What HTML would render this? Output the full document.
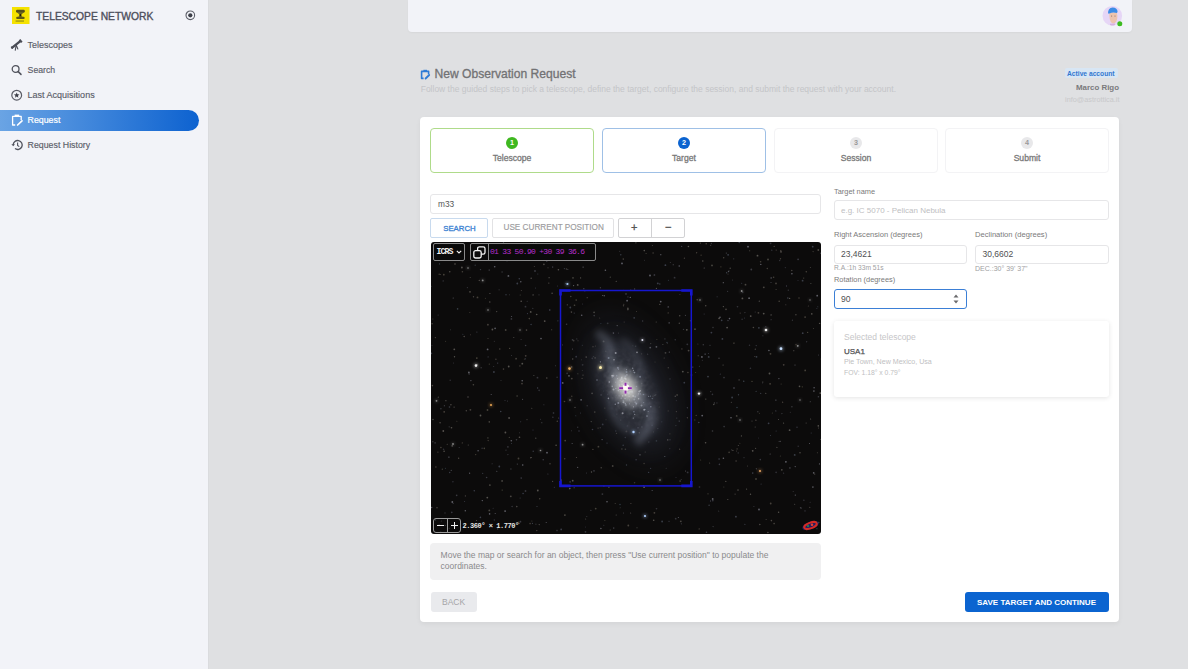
<!DOCTYPE html>
<html><head><meta charset="utf-8">
<style>
*{box-sizing:border-box;margin:0;padding:0}
html,body{width:1188px;height:669px;overflow:hidden;background:#dfe0e2;font-family:"Liberation Sans",sans-serif}
.a{position:absolute}
.t{position:absolute;white-space:nowrap;line-height:1}
#side{left:0;top:0;width:209px;height:669px;background:#f2f3f8;border-right:1px solid #dadbde}
#hdr{left:408px;top:0;width:723.5px;height:32px;background:#f2f3f8;border-radius:0 0 4px 4px;box-shadow:0 1px 2px rgba(0,0,0,.04)}
#card{left:420px;top:117px;width:699px;height:505px;background:#fff;border-radius:4px;box-shadow:0 2px 5px rgba(0,0,0,.05)}
.step{position:absolute;top:128px;height:44.5px;width:164px;border:1px solid #f3f3f5;border-radius:4px;background:#fff}
.circ{position:absolute;left:50%;top:7.5px;width:12px;height:12px;margin-left:-6px;border-radius:50%;font-size:7.2px;line-height:12px;text-align:center;color:#fff;font-weight:bold}
.slab{position:absolute;left:0;right:0;top:25px;text-align:center;font-size:8.6px;color:#777;line-height:1;-webkit-text-stroke:0.3px #7a7a7a}
.inp{position:absolute;border:1px solid #e6e6e8;border-radius:3px;background:#fff}
.lbl{position:absolute;font-size:7.4px;color:#7a7a7a;line-height:1;white-space:nowrap}
.btn{position:absolute;border:1px solid #e2e2e4;border-radius:2px;background:#fff;text-align:center;white-space:nowrap}
</style></head><body>

<!-- SIDEBAR -->
<div id="side" class="a"></div>
<div class="t" style="left:36px;top:11.8px;font-size:10.3px;color:#4d4f5c;-webkit-text-stroke:0.35px #4d4f5c">TELESCOPE NETWORK</div>

<div class="t" style="left:27.6px;top:41px;font-size:9px;color:#5a5d68;-webkit-text-stroke:0.15px #5a5d68">Telescopes</div>
<div class="t" style="left:27.6px;top:66px;font-size:8.7px;color:#5a5d68;-webkit-text-stroke:0.15px #5a5d68">Search</div>
<div class="t" style="left:27.6px;top:91px;font-size:9px;color:#5a5d68;-webkit-text-stroke:0.15px #5a5d68">Last Acquisitions</div>
<div class="a" style="left:0;top:110px;width:199px;height:21px;border-radius:0 10.5px 10.5px 0;background:linear-gradient(90deg,#6aa4e4,#0d62d0)"></div>
<div class="t" style="left:27.6px;top:116px;font-size:8.8px;color:#fff;-webkit-text-stroke:0.2px #fff">Request</div>
<div class="t" style="left:27.6px;top:141px;font-size:8.8px;color:#5a5d68;-webkit-text-stroke:0.15px #5a5d68">Request History</div>

<!-- HEADER -->
<div id="hdr" class="a"></div>
<!-- ICONS -->
<svg class="a" style="left:12.2px;top:6.8px" width="17.5" height="17.5" viewBox="0 0 17.5 17.5">
<rect x="0" y="0" width="17.5" height="17.5" fill="#f5e200"/>
<rect x="4" y="2.8" width="8.8" height="2.6" rx="1.2" fill="#55501a"/>
<path d="M4.4,5 L8.4,8.2 L12.4,5 Z M4.4,11.2 L8.4,8.2 L12.4,11.2 Z" fill="#6a6420"/>
<circle cx="8.4" cy="8.2" r="1.1" fill="#1e1a08"/>
<rect x="4.2" y="9.8" width="8.4" height="2.2" rx="1" fill="#5e5818"/>
<rect x="3.6" y="13.5" width="8.4" height="1.1" fill="#8c8618"/>
</svg>
<svg class="a" style="left:184px;top:9px" width="13" height="13" viewBox="0 0 13 13"><circle cx="6.3" cy="6.3" r="4.3" fill="none" stroke="#5c5e68" stroke-width="1.1"/><circle cx="6.3" cy="6.3" r="2.1" fill="#3c3e48"/></svg>
<svg class="a" style="left:10px;top:37px" width="14" height="16" viewBox="0 0 14 16"><path d="M2.2,10.6 L10,4.4" stroke="#4a4c56" stroke-width="2.4" stroke-linecap="round"/><path d="M9.6,2.6 L11.8,5.4" stroke="#4a4c56" stroke-width="2"/><path d="M6.2,8 L5.2,13.6 M6.2,8 L8,12.4" stroke="#4a4c56" stroke-width="1.1"/><path d="M1.2,9.6 L2.6,11.6" stroke="#4a4c56" stroke-width="1.2"/></svg>
<svg class="a" style="left:10px;top:63px" width="14" height="14" viewBox="0 0 14 14"><circle cx="5.6" cy="6" r="3.4" fill="none" stroke="#50525c" stroke-width="1.3"/><path d="M8.2,8.6 L11,11.4" stroke="#50525c" stroke-width="1.5" stroke-linecap="round"/></svg>
<svg class="a" style="left:10px;top:88px" width="14" height="14" viewBox="0 0 14 14"><circle cx="6.7" cy="7.2" r="4.9" fill="none" stroke="#5a5c66" stroke-width="1.2"/><path d="M6.70,4.40 L7.46,6.25 L9.46,6.40 L7.94,7.70 L8.40,9.65 L6.70,8.60 L5.00,9.65 L5.46,7.70 L3.94,6.40 L5.94,6.25 Z" fill="#3c3e48"/></svg>
<svg class="a" style="left:10px;top:113px" width="14" height="14" viewBox="0 0 14 14"><path d="M5.2,12 L2.6,12 L2.6,3.4 L11.2,3.4 L11.2,7" stroke="#fff" stroke-width="1.3" fill="none" stroke-linejoin="round"/><path d="M4.6,1.6 L9.2,1.6 L9.2,3.6 L4.6,3.6 Z" fill="#fff"/><path d="M7.6,12 L12,7.8" stroke="#fff" stroke-width="1.7" stroke-linecap="round"/></svg>
<svg class="a" style="left:10px;top:138px" width="14" height="14" viewBox="0 0 14 14"><path d="M3.2,7 A4.5,4.5 0 1 1 5,10.6" stroke="#50525c" stroke-width="1.3" fill="none"/><path d="M1.4,6.2 L3.2,8.2 L5,6.2 Z" fill="#50525c"/><path d="M7.6,4.6 L7.6,7.4 L9.3,8.6" stroke="#50525c" stroke-width="1.1" fill="none"/></svg>
<!-- avatar -->
<svg class="a" style="left:1101px;top:4px" width="26" height="26" viewBox="0 0 26 26">
<circle cx="11.3" cy="11.7" r="9.8" fill="#e6d6f6"/>
<path d="M8.4,8.6 Q8.2,15.5 9.8,18 Q11.2,19.8 13,19.6 Q15.6,18.6 16.2,15 Q16.6,11.5 15.8,8.4 Z" fill="#eec4ae"/>
<path d="M7,9.6 Q6.8,4 11.6,3.4 Q16.4,3.4 16.6,8 L15.8,9 Q12,7.6 8.6,9.4 Z" fill="#3c8ce6"/>
<circle cx="10.6" cy="12" r="0.6" fill="#8a6a60"/><circle cx="14" cy="12" r="0.6" fill="#8a6a60"/>
<path d="M9,21 Q11.3,22.2 14,21 L14,19.6 L9,19.8 Z" fill="#d8b0e0"/>
<circle cx="18.8" cy="19.8" r="2.5" fill="#3cbb20"/>
</svg>
<svg class="a" style="left:419px;top:68px" width="12" height="12" viewBox="0 0 12 12"><path d="M4.6,10.4 L2.6,10.4 L2.6,3.4 L9.6,3.4 L9.6,6.2" stroke="#2d7bd6" stroke-width="1.6" fill="none" stroke-linejoin="round"/><path d="M4.4,1.8 L8,1.8 L8,3.6 L4.4,3.6 Z" fill="#2d7bd6"/><path d="M6.6,10.5 L10.2,7" stroke="#2d7bd6" stroke-width="1.8" stroke-linecap="round"/></svg>



<div class="t" style="left:434.5px;top:68.4px;font-size:12.1px;color:#727274;-webkit-text-stroke:0.3px #727274">New Observation Request</div>
<div class="t" style="left:420.7px;top:84.5px;font-size:8.5px;color:#c4c5c8">Follow the guided steps to pick a telescope, define the target, configure the session, and submit the request with your account.</div>
<div class="a" style="left:1065px;top:68px;width:53px;height:10px;border-radius:2px;background:#d8e6f4"></div>
<div class="t" style="left:1067px;top:70.5px;font-size:6.7px;font-weight:bold;color:#3277d0">Active account</div>
<div class="t" style="right:69px;top:84px;font-size:7.9px;font-weight:bold;color:#7a7a7c">Marco Rigo</div>
<div class="t" style="right:68.5px;top:96px;font-size:7.3px;color:#c8c8ca">info@astrottica.it</div>

<!-- CARD -->
<div id="card" class="a"></div>

<div class="step" style="left:430px;border-color:#afdb8a"><div class="circ" style="background:#3fb820">1</div><div class="slab">Telescope</div></div>
<div class="step" style="left:602px;border-color:#9fc0e6"><div class="circ" style="background:#0b63d0">2</div><div class="slab">Target</div></div>
<div class="step" style="left:774px"><div class="circ" style="background:#e8e8ea;color:#999">3</div><div class="slab">Session</div></div>
<div class="step" style="left:945px"><div class="circ" style="background:#e8e8ea;color:#999">4</div><div class="slab">Submit</div></div>

<div class="inp" style="left:430px;top:194px;width:391px;height:19.5px"></div>
<div class="t" style="left:438px;top:199.6px;font-size:8.3px;color:#555">m33</div>

<div class="btn" style="left:430px;top:218px;width:58px;height:19.5px;border-color:#c8daee"></div>
<div class="t" style="left:443.2px;top:224.6px;font-size:7.8px;color:#3a7fd2;-webkit-text-stroke:0.3px #3a7fd2">SEARCH</div>
<div class="btn" style="left:492px;top:218px;width:121.5px;height:19.5px"></div>
<div class="t" style="left:503.5px;top:224px;font-size:8.2px;color:#9c9c9e;-webkit-text-stroke:0.15px #9c9c9e">USE CURRENT POSITION</div>
<div class="btn" style="left:618px;top:218px;width:67px;height:19.5px;border-color:#d2d2d4"></div>
<div class="a" style="left:651px;top:218px;width:1px;height:19.5px;background:#d2d2d4"></div>
<div class="t" style="left:631px;top:222px;font-size:11px;color:#555;-webkit-text-stroke:0.3px #555">+</div>
<div class="t" style="left:665px;top:222px;font-size:11px;color:#555;-webkit-text-stroke:0.3px #555">−</div>

<!-- MAP -->
<div id="map" class="a" style="left:431px;top:242px;width:389.5px;height:292px;background:#0c0b0b;border-radius:3px;overflow:hidden"><svg width="390" height="292" viewBox="0 0 390 292" style="position:absolute;left:0;top:0">
<defs>
<filter id="b8" x="-50%" y="-50%" width="200%" height="200%"><feGaussianBlur stdDeviation="9"/></filter>
<filter id="b5" x="-50%" y="-50%" width="200%" height="200%"><feGaussianBlur stdDeviation="5"/></filter>
<filter id="b3" x="-50%" y="-50%" width="200%" height="200%"><feGaussianBlur stdDeviation="3"/></filter>
<filter id="b2" x="-50%" y="-50%" width="200%" height="200%"><feGaussianBlur stdDeviation="1.6"/></filter>
<filter id="bs" x="0" y="0" width="390" height="292" filterUnits="userSpaceOnUse"><feGaussianBlur stdDeviation="0.45"/></filter>
<filter id="b1" x="-100%" y="-100%" width="300%" height="300%"><feGaussianBlur stdDeviation="0.6"/></filter>
</defs>
<g filter="url(#bs)">
<circle cx="126.3" cy="44.0" r="0.5" fill="#3a3a40"/>
<circle cx="320.3" cy="27.5" r="0.9" fill="#3a3a40"/>
<circle cx="354.8" cy="62.7" r="0.5" fill="#4a4642"/>
<circle cx="163.1" cy="70.3" r="0.9" fill="#4a4642"/>
<circle cx="23.1" cy="165.1" r="0.6" fill="#55524e"/>
<circle cx="244.7" cy="276.7" r="0.9" fill="#34343a"/>
<circle cx="154.7" cy="285.1" r="0.5" fill="#34343a"/>
<circle cx="334.8" cy="84.6" r="0.6" fill="#34343a"/>
<circle cx="45.9" cy="90.1" r="0.6" fill="#3a3a40"/>
<circle cx="226.8" cy="186.6" r="0.7" fill="#3a3a40"/>
<circle cx="213.6" cy="18.3" r="0.5" fill="#34343a"/>
<circle cx="80.3" cy="198.7" r="0.8" fill="#606068"/>
<circle cx="122.5" cy="171.0" r="0.8" fill="#3a3e48"/>
<circle cx="116.9" cy="232.0" r="0.6" fill="#3a3a40"/>
<circle cx="224.0" cy="153.4" r="0.7" fill="#55524e"/>
<circle cx="175.0" cy="177.8" r="0.5" fill="#3a3a40"/>
<circle cx="199.7" cy="48.2" r="0.7" fill="#45403a"/>
<circle cx="364.0" cy="123.1" r="0.5" fill="#606068"/>
<circle cx="217.6" cy="230.4" r="0.7" fill="#3a3e48"/>
<circle cx="271.2" cy="173.6" r="0.9" fill="#606068"/>
<circle cx="177.9" cy="245.3" r="0.7" fill="#4a4642"/>
<circle cx="271.8" cy="19.0" r="0.7" fill="#55524e"/>
<circle cx="225.4" cy="198.9" r="0.8" fill="#3a3e48"/>
<circle cx="279.5" cy="259.0" r="0.7" fill="#3a3a40"/>
<circle cx="366.9" cy="103.8" r="0.9" fill="#3a3a40"/>
<circle cx="192.5" cy="63.7" r="0.7" fill="#45403a"/>
<circle cx="288.0" cy="116.2" r="0.8" fill="#3a3a40"/>
<circle cx="64.9" cy="117.3" r="0.7" fill="#45403a"/>
<circle cx="319.5" cy="252.3" r="0.7" fill="#55524e"/>
<circle cx="162.0" cy="104.8" r="0.8" fill="#45403a"/>
<circle cx="58.9" cy="51.5" r="0.6" fill="#55524e"/>
<circle cx="91.0" cy="141.6" r="0.9" fill="#45403a"/>
<circle cx="102.5" cy="1.2" r="0.8" fill="#34343a"/>
<circle cx="144.0" cy="165.4" r="0.6" fill="#55524e"/>
<circle cx="335.1" cy="277.5" r="0.5" fill="#4a4642"/>
<circle cx="350.8" cy="227.8" r="0.9" fill="#4a4642"/>
<circle cx="155.2" cy="115.1" r="0.8" fill="#55524e"/>
<circle cx="156.2" cy="55.7" r="0.6" fill="#4a4642"/>
<circle cx="63.3" cy="99.3" r="0.5" fill="#3a3a40"/>
<circle cx="0.1" cy="44.2" r="0.5" fill="#3a3e48"/>
<circle cx="239.4" cy="20.5" r="0.6" fill="#34343a"/>
<circle cx="146.7" cy="185.2" r="0.7" fill="#34343a"/>
<circle cx="142.0" cy="35.9" r="0.8" fill="#4a4642"/>
<circle cx="187.4" cy="91.1" r="0.6" fill="#3a3a40"/>
<circle cx="292.4" cy="216.2" r="0.8" fill="#606068"/>
<circle cx="269.9" cy="150.8" r="0.6" fill="#34343a"/>
<circle cx="141.1" cy="201.5" r="0.5" fill="#606068"/>
<circle cx="206.0" cy="285.7" r="0.5" fill="#55524e"/>
<circle cx="329.7" cy="151.4" r="0.6" fill="#3a3e48"/>
<circle cx="301.1" cy="155.5" r="0.9" fill="#3a3e48"/>
<circle cx="248.2" cy="179.1" r="0.6" fill="#606068"/>
<circle cx="93.4" cy="117.0" r="0.6" fill="#45403a"/>
<circle cx="201.9" cy="103.8" r="0.5" fill="#3a3a40"/>
<circle cx="308.1" cy="137.9" r="0.6" fill="#55524e"/>
<circle cx="236.0" cy="100.5" r="0.7" fill="#3a3e48"/>
<circle cx="31.4" cy="29.8" r="0.8" fill="#45403a"/>
<circle cx="131.7" cy="140.9" r="0.9" fill="#606068"/>
<circle cx="0.7" cy="265.5" r="0.7" fill="#606068"/>
<circle cx="250.8" cy="243.7" r="0.5" fill="#4a4642"/>
<circle cx="305.1" cy="219.0" r="0.8" fill="#45403a"/>
<circle cx="169.2" cy="185.7" r="0.5" fill="#606068"/>
<circle cx="369.0" cy="210.8" r="0.8" fill="#4a4642"/>
<circle cx="289.9" cy="24.8" r="0.6" fill="#45403a"/>
<circle cx="387.3" cy="8.0" r="0.9" fill="#4a4642"/>
<circle cx="314.5" cy="42.7" r="0.9" fill="#4a4642"/>
<circle cx="256.3" cy="102.3" r="0.9" fill="#34343a"/>
<circle cx="51.1" cy="4.2" r="0.5" fill="#34343a"/>
<circle cx="292.3" cy="40.7" r="0.6" fill="#606068"/>
<circle cx="340.8" cy="8.2" r="0.6" fill="#3a3e48"/>
<circle cx="195.5" cy="223.0" r="0.7" fill="#3a3e48"/>
<circle cx="212.3" cy="243.6" r="0.5" fill="#55524e"/>
<circle cx="138.0" cy="133.8" r="0.9" fill="#606068"/>
<circle cx="352.7" cy="122.8" r="0.9" fill="#45403a"/>
<circle cx="207.4" cy="152.9" r="0.5" fill="#606068"/>
<circle cx="171.6" cy="53.5" r="0.5" fill="#606068"/>
<circle cx="311.7" cy="50.3" r="0.8" fill="#34343a"/>
<circle cx="282.8" cy="162.5" r="0.7" fill="#55524e"/>
<circle cx="202.2" cy="162.2" r="0.5" fill="#34343a"/>
<circle cx="22.2" cy="55.9" r="0.5" fill="#606068"/>
<circle cx="38.1" cy="132.0" r="0.5" fill="#606068"/>
<circle cx="348.7" cy="18.5" r="0.7" fill="#34343a"/>
<circle cx="379.6" cy="177.0" r="0.6" fill="#55524e"/>
<circle cx="108.1" cy="148.4" r="0.8" fill="#34343a"/>
<circle cx="367.2" cy="204.2" r="0.7" fill="#34343a"/>
<circle cx="348.2" cy="59.2" r="0.8" fill="#45403a"/>
<circle cx="162.5" cy="114.6" r="0.7" fill="#3a3a40"/>
<circle cx="261.8" cy="125.1" r="0.6" fill="#55524e"/>
<circle cx="118.1" cy="35.7" r="0.6" fill="#55524e"/>
<circle cx="250.9" cy="106.9" r="0.7" fill="#45403a"/>
<circle cx="377.3" cy="64.1" r="0.5" fill="#4a4642"/>
<circle cx="345.1" cy="47.5" r="0.6" fill="#45403a"/>
<circle cx="275.5" cy="290.3" r="0.8" fill="#3a3e48"/>
<circle cx="164.3" cy="104.1" r="0.5" fill="#55524e"/>
<circle cx="142.7" cy="98.7" r="0.8" fill="#4a4642"/>
<circle cx="274.2" cy="112.2" r="0.9" fill="#34343a"/>
<circle cx="115.2" cy="280.5" r="0.5" fill="#606068"/>
<circle cx="89.1" cy="255.9" r="0.5" fill="#3a3e48"/>
<circle cx="106.0" cy="264.5" r="0.6" fill="#3a3e48"/>
<circle cx="294.8" cy="239.4" r="0.7" fill="#4a4642"/>
<circle cx="58.3" cy="268.4" r="0.9" fill="#4a4642"/>
<circle cx="273.2" cy="26.1" r="0.5" fill="#606068"/>
<circle cx="268.4" cy="124.2" r="0.5" fill="#3a3e48"/>
<circle cx="366.0" cy="185.3" r="0.7" fill="#3a3a40"/>
<circle cx="237.2" cy="64.9" r="0.7" fill="#606068"/>
<circle cx="47.5" cy="3.4" r="0.9" fill="#4a4642"/>
<circle cx="361.4" cy="78.2" r="0.6" fill="#3a3a40"/>
<circle cx="205.5" cy="69.6" r="0.5" fill="#45403a"/>
<circle cx="102.1" cy="52.9" r="0.7" fill="#55524e"/>
<circle cx="119.0" cy="221.8" r="0.7" fill="#4a4642"/>
<circle cx="195.0" cy="51.9" r="0.7" fill="#606068"/>
<circle cx="7.1" cy="73.1" r="0.5" fill="#3a3a40"/>
<circle cx="285.9" cy="160.9" r="0.6" fill="#34343a"/>
<circle cx="185.2" cy="272.9" r="0.5" fill="#55524e"/>
<circle cx="319.4" cy="126.2" r="0.8" fill="#34343a"/>
<circle cx="325.5" cy="114.8" r="0.9" fill="#3a3e48"/>
<circle cx="268.2" cy="286.9" r="0.7" fill="#45403a"/>
<circle cx="324.6" cy="206.4" r="0.6" fill="#4a4642"/>
<circle cx="385.9" cy="286.7" r="0.6" fill="#3a3a40"/>
<circle cx="27.6" cy="216.3" r="0.7" fill="#4a4642"/>
<circle cx="63.7" cy="24.7" r="0.8" fill="#606068"/>
<circle cx="197.3" cy="283.5" r="0.9" fill="#45403a"/>
<circle cx="270.1" cy="13.2" r="0.6" fill="#45403a"/>
<circle cx="104.9" cy="1.1" r="0.7" fill="#3a3e48"/>
<circle cx="379.3" cy="159.7" r="0.6" fill="#3a3a40"/>
<circle cx="376.6" cy="90.4" r="0.7" fill="#45403a"/>
<circle cx="0.4" cy="111.4" r="0.8" fill="#3a3e48"/>
<circle cx="196.1" cy="58.7" r="0.9" fill="#606068"/>
<circle cx="1.9" cy="77.1" r="0.5" fill="#45403a"/>
<circle cx="155.8" cy="12.2" r="0.5" fill="#3a3e48"/>
<circle cx="118.7" cy="68.0" r="0.9" fill="#34343a"/>
<circle cx="332.8" cy="45.3" r="0.9" fill="#4a4642"/>
<circle cx="298.1" cy="210.4" r="0.8" fill="#45403a"/>
<circle cx="110.8" cy="180.7" r="0.6" fill="#3a3a40"/>
<circle cx="321.7" cy="208.8" r="0.9" fill="#55524e"/>
<circle cx="167.4" cy="204.7" r="0.9" fill="#45403a"/>
<circle cx="354.9" cy="219.8" r="0.9" fill="#606068"/>
<circle cx="317.0" cy="4.7" r="0.9" fill="#606068"/>
<circle cx="348.2" cy="199.4" r="0.6" fill="#3a3a40"/>
<circle cx="12.2" cy="38.9" r="0.7" fill="#3a3a40"/>
<circle cx="146.9" cy="131.8" r="0.5" fill="#55524e"/>
<circle cx="7.3" cy="155.2" r="0.6" fill="#4a4642"/>
<circle cx="102.9" cy="133.4" r="0.5" fill="#55524e"/>
<circle cx="363.7" cy="262.2" r="0.5" fill="#55524e"/>
<circle cx="205.1" cy="217.8" r="0.8" fill="#3a3e48"/>
<circle cx="315.6" cy="247.1" r="0.6" fill="#55524e"/>
<circle cx="295.0" cy="67.4" r="0.8" fill="#4a4642"/>
<circle cx="329.8" cy="22.4" r="0.7" fill="#606068"/>
<circle cx="18.2" cy="184.8" r="0.6" fill="#3a3a40"/>
<circle cx="233.9" cy="96.9" r="0.7" fill="#34343a"/>
<circle cx="221.4" cy="3.6" r="0.5" fill="#4a4642"/>
<circle cx="104.8" cy="196.2" r="0.6" fill="#55524e"/>
<circle cx="190.9" cy="207.0" r="0.7" fill="#4a4642"/>
<circle cx="181.7" cy="224.0" r="0.9" fill="#45403a"/>
<circle cx="121.6" cy="25.1" r="0.8" fill="#3a3a40"/>
<circle cx="112.9" cy="22.3" r="0.9" fill="#4a4642"/>
<circle cx="387.6" cy="113.0" r="0.6" fill="#3a3a40"/>
<circle cx="226.8" cy="41.4" r="0.9" fill="#3a3e48"/>
<circle cx="371.6" cy="38.7" r="0.9" fill="#3a3e48"/>
<circle cx="345.9" cy="205.4" r="0.6" fill="#4a4642"/>
<circle cx="350.1" cy="142.0" r="0.5" fill="#45403a"/>
<circle cx="1.4" cy="143.6" r="0.8" fill="#4a4642"/>
<circle cx="117.8" cy="41.1" r="0.7" fill="#4a4642"/>
<circle cx="123.3" cy="245.3" r="0.5" fill="#3a3e48"/>
<circle cx="292.8" cy="245.0" r="0.5" fill="#45403a"/>
<circle cx="278.1" cy="263.3" r="0.7" fill="#3a3e48"/>
<circle cx="145.2" cy="114.7" r="0.9" fill="#3a3a40"/>
<circle cx="140.7" cy="125.0" r="0.7" fill="#606068"/>
<circle cx="18.8" cy="29.7" r="0.7" fill="#55524e"/>
<circle cx="364.9" cy="72.8" r="0.7" fill="#4a4642"/>
<circle cx="199.3" cy="55.4" r="0.7" fill="#606068"/>
<circle cx="372.9" cy="258.2" r="0.8" fill="#34343a"/>
<circle cx="214.2" cy="210.1" r="0.5" fill="#55524e"/>
<circle cx="160.2" cy="179.6" r="0.6" fill="#55524e"/>
<circle cx="339.1" cy="141.8" r="0.9" fill="#45403a"/>
<circle cx="66.6" cy="121.1" r="0.7" fill="#3a3e48"/>
<circle cx="99.7" cy="215.7" r="0.7" fill="#4a4642"/>
<circle cx="255.8" cy="87.8" r="0.9" fill="#55524e"/>
<circle cx="153.8" cy="48.9" r="0.6" fill="#3a3a40"/>
<circle cx="81.1" cy="264.5" r="0.8" fill="#34343a"/>
<circle cx="85.8" cy="264.6" r="0.8" fill="#4a4642"/>
<circle cx="54.4" cy="56.2" r="0.5" fill="#45403a"/>
<circle cx="133.4" cy="26.6" r="0.6" fill="#3a3e48"/>
<circle cx="100.8" cy="166.3" r="0.5" fill="#55524e"/>
<circle cx="339.5" cy="111.8" r="0.9" fill="#45403a"/>
<circle cx="147.0" cy="98.8" r="0.5" fill="#4a4642"/>
<circle cx="108.2" cy="282.6" r="0.6" fill="#55524e"/>
<circle cx="196.3" cy="183.9" r="0.6" fill="#3a3a40"/>
<circle cx="105.7" cy="72.5" r="0.8" fill="#55524e"/>
<circle cx="173.9" cy="278.6" r="0.5" fill="#45403a"/>
<circle cx="12.6" cy="207.2" r="0.8" fill="#34343a"/>
<circle cx="191.0" cy="21.4" r="0.9" fill="#606068"/>
<circle cx="182.6" cy="131.1" r="0.5" fill="#45403a"/>
<circle cx="60.2" cy="152.5" r="0.5" fill="#606068"/>
<circle cx="281.5" cy="189.0" r="0.8" fill="#3a3a40"/>
<circle cx="215.1" cy="11.5" r="0.6" fill="#45403a"/>
<circle cx="222.1" cy="11.0" r="0.7" fill="#45403a"/>
<circle cx="244.3" cy="154.2" r="0.8" fill="#55524e"/>
<circle cx="297.9" cy="29.0" r="0.7" fill="#34343a"/>
<circle cx="368.0" cy="56.0" r="0.7" fill="#45403a"/>
<circle cx="308.3" cy="0.3" r="0.9" fill="#3a3e48"/>
<circle cx="388.6" cy="81.4" r="0.7" fill="#55524e"/>
<circle cx="327.4" cy="70.8" r="0.9" fill="#45403a"/>
<circle cx="213.3" cy="8.6" r="0.8" fill="#55524e"/>
<circle cx="253.4" cy="16.2" r="0.6" fill="#4a4642"/>
<circle cx="345.1" cy="189.0" r="0.5" fill="#3a3e48"/>
<circle cx="88.9" cy="123.9" r="0.7" fill="#45403a"/>
<circle cx="192.2" cy="203.2" r="0.8" fill="#3a3e48"/>
<circle cx="266.2" cy="57.8" r="0.7" fill="#55524e"/>
<circle cx="329.6" cy="19.7" r="0.8" fill="#45403a"/>
<circle cx="121.6" cy="239.4" r="0.6" fill="#4a4642"/>
<circle cx="86.4" cy="222.1" r="0.7" fill="#3a3a40"/>
<circle cx="371.3" cy="144.8" r="0.6" fill="#45403a"/>
<circle cx="189.2" cy="265.8" r="0.5" fill="#34343a"/>
<circle cx="57.1" cy="114.9" r="0.6" fill="#3a3a40"/>
<circle cx="379.9" cy="41.4" r="0.5" fill="#55524e"/>
<circle cx="23.5" cy="114.8" r="0.7" fill="#55524e"/>
<circle cx="44.2" cy="23.2" r="0.6" fill="#3a3e48"/>
<circle cx="74.4" cy="190.5" r="0.9" fill="#55524e"/>
<circle cx="182.4" cy="91.1" r="0.8" fill="#606068"/>
<circle cx="145.8" cy="96.9" r="0.6" fill="#3a3a40"/>
<circle cx="1.1" cy="81.7" r="0.7" fill="#4a4642"/>
<circle cx="372.7" cy="36.1" r="0.6" fill="#4a4642"/>
<circle cx="139.1" cy="239.9" r="0.8" fill="#3a3a40"/>
<circle cx="19.2" cy="138.3" r="0.7" fill="#34343a"/>
<circle cx="358.6" cy="56.4" r="0.7" fill="#55524e"/>
<circle cx="349.8" cy="8.8" r="0.8" fill="#45403a"/>
<circle cx="316.6" cy="223.9" r="0.5" fill="#4a4642"/>
<circle cx="13.6" cy="18.3" r="0.5" fill="#3a3e48"/>
<circle cx="76.0" cy="18.4" r="0.9" fill="#3a3e48"/>
<circle cx="141.6" cy="97.8" r="0.9" fill="#3a3a40"/>
<circle cx="102.2" cy="209.3" r="0.7" fill="#3a3e48"/>
<circle cx="116.0" cy="210.7" r="0.9" fill="#606068"/>
<circle cx="247.3" cy="275.4" r="0.5" fill="#606068"/>
<circle cx="91.2" cy="138.8" r="0.8" fill="#606068"/>
<circle cx="150.7" cy="73.3" r="0.8" fill="#606068"/>
<circle cx="192.5" cy="271.0" r="0.6" fill="#3a3a40"/>
<circle cx="313.0" cy="215.6" r="0.6" fill="#34343a"/>
<circle cx="92.1" cy="251.5" r="0.8" fill="#3a3e48"/>
<circle cx="305.7" cy="173.9" r="0.9" fill="#45403a"/>
<circle cx="152.8" cy="46.7" r="0.8" fill="#3a3a40"/>
<circle cx="253.3" cy="140.7" r="0.9" fill="#3a3e48"/>
<circle cx="62.7" cy="124.6" r="0.5" fill="#3a3a40"/>
<circle cx="103.3" cy="24.6" r="0.5" fill="#4a4642"/>
<circle cx="194.4" cy="207.3" r="0.8" fill="#45403a"/>
<circle cx="91.3" cy="121.7" r="0.9" fill="#55524e"/>
<circle cx="91.6" cy="157.3" r="0.5" fill="#606068"/>
<circle cx="327.9" cy="85.8" r="0.9" fill="#3a3e48"/>
<circle cx="145.5" cy="215.5" r="0.6" fill="#4a4642"/>
<circle cx="96.5" cy="71.6" r="0.6" fill="#3a3e48"/>
<circle cx="344.8" cy="168.9" r="0.7" fill="#3a3a40"/>
<circle cx="154.5" cy="289.8" r="0.9" fill="#34343a"/>
<circle cx="90.2" cy="236.1" r="0.8" fill="#3a3a40"/>
<circle cx="39.9" cy="138.6" r="0.6" fill="#606068"/>
<circle cx="174.8" cy="109.2" r="0.7" fill="#45403a"/>
<circle cx="46.5" cy="55.4" r="0.9" fill="#45403a"/>
<circle cx="362.8" cy="108.7" r="0.6" fill="#4a4642"/>
<circle cx="235.2" cy="226.3" r="0.5" fill="#3a3a40"/>
<circle cx="248.6" cy="207.2" r="0.7" fill="#45403a"/>
<circle cx="14.6" cy="99.3" r="0.5" fill="#45403a"/>
<circle cx="390.0" cy="11.2" r="0.6" fill="#606068"/>
<circle cx="4.4" cy="95.6" r="0.7" fill="#45403a"/>
<circle cx="242.2" cy="22.8" r="0.5" fill="#606068"/>
<circle cx="193.3" cy="141.2" r="0.8" fill="#3a3a40"/>
<circle cx="310.4" cy="193.9" r="0.6" fill="#55524e"/>
<circle cx="208.3" cy="190.7" r="0.8" fill="#55524e"/>
<circle cx="105.8" cy="288.6" r="0.7" fill="#4a4642"/>
<circle cx="371.7" cy="91.2" r="0.9" fill="#3a3e48"/>
<circle cx="161.5" cy="5.3" r="0.7" fill="#55524e"/>
<circle cx="76.9" cy="212.6" r="0.6" fill="#3a3a40"/>
<circle cx="169.3" cy="45.7" r="0.5" fill="#606068"/>
<circle cx="35.3" cy="168.7" r="0.7" fill="#4a4642"/>
<circle cx="301.5" cy="38.0" r="0.5" fill="#34343a"/>
<circle cx="55.6" cy="235.5" r="0.8" fill="#3a3a40"/>
<circle cx="223.4" cy="270.8" r="0.9" fill="#45403a"/>
<circle cx="56.9" cy="82.7" r="0.9" fill="#45403a"/>
<circle cx="360.9" cy="31.8" r="0.8" fill="#606068"/>
<circle cx="313.9" cy="282.3" r="0.6" fill="#3a3e48"/>
<circle cx="49.4" cy="275.4" r="0.8" fill="#3a3e48"/>
<circle cx="20.8" cy="270.4" r="0.8" fill="#3a3a40"/>
<circle cx="352.6" cy="181.1" r="0.6" fill="#55524e"/>
<circle cx="306.5" cy="64.8" r="0.8" fill="#34343a"/>
<circle cx="330.1" cy="242.1" r="0.6" fill="#34343a"/>
<circle cx="85.1" cy="116.7" r="0.9" fill="#45403a"/>
<circle cx="149.6" cy="35.9" r="0.6" fill="#55524e"/>
<circle cx="318.1" cy="56.2" r="0.9" fill="#606068"/>
<circle cx="295.4" cy="11.1" r="0.7" fill="#3a3a40"/>
<circle cx="152.0" cy="133.1" r="0.7" fill="#55524e"/>
<circle cx="163.8" cy="170.1" r="0.8" fill="#4a4642"/>
<circle cx="256.9" cy="130.5" r="0.8" fill="#45403a"/>
<circle cx="9.1" cy="180.7" r="0.8" fill="#4a4642"/>
<circle cx="91.7" cy="223.0" r="0.8" fill="#606068"/>
<circle cx="70.0" cy="138.2" r="0.5" fill="#3a3a40"/>
<circle cx="50.1" cy="125.7" r="0.5" fill="#606068"/>
<circle cx="172.4" cy="149.0" r="0.5" fill="#3a3a40"/>
<circle cx="248.2" cy="24.0" r="0.7" fill="#606068"/>
<circle cx="281.0" cy="23.4" r="0.9" fill="#4a4642"/>
<circle cx="254.6" cy="229.0" r="0.5" fill="#606068"/>
<circle cx="25.9" cy="179.3" r="0.5" fill="#45403a"/>
<circle cx="51.3" cy="258.6" r="0.7" fill="#606068"/>
<circle cx="357.3" cy="48.2" r="0.6" fill="#3a3a40"/>
<circle cx="324.9" cy="178.2" r="0.7" fill="#45403a"/>
<circle cx="126.3" cy="179.2" r="0.8" fill="#45403a"/>
<circle cx="99.1" cy="281.6" r="0.8" fill="#45403a"/>
<circle cx="230.8" cy="179.8" r="0.6" fill="#3a3e48"/>
<circle cx="145.2" cy="58.1" r="0.8" fill="#45403a"/>
<circle cx="248.3" cy="81.2" r="0.7" fill="#4a4642"/>
<circle cx="65.8" cy="229.2" r="0.5" fill="#606068"/>
<circle cx="207.0" cy="185.8" r="0.7" fill="#606068"/>
<circle cx="176.7" cy="152.3" r="0.5" fill="#3a3e48"/>
<circle cx="387.3" cy="183.9" r="0.8" fill="#55524e"/>
<circle cx="311.1" cy="77.3" r="0.7" fill="#34343a"/>
<circle cx="57.0" cy="96.6" r="0.5" fill="#4a4642"/>
<circle cx="89.7" cy="179.7" r="0.5" fill="#3a3e48"/>
<circle cx="319.7" cy="74.1" r="0.9" fill="#55524e"/>
<circle cx="349.3" cy="214.0" r="0.5" fill="#45403a"/>
<circle cx="58.3" cy="179.9" r="0.8" fill="#4a4642"/>
<circle cx="199.9" cy="261.5" r="0.6" fill="#4a4642"/>
<circle cx="88.6" cy="190.7" r="0.5" fill="#3a3a40"/>
<circle cx="1.0" cy="103.6" r="0.5" fill="#34343a"/>
<circle cx="139.3" cy="65.5" r="0.9" fill="#3a3e48"/>
<circle cx="229.7" cy="59.6" r="0.9" fill="#606068"/>
<circle cx="185.2" cy="39.3" r="0.6" fill="#55524e"/>
<circle cx="58.2" cy="28.0" r="0.6" fill="#606068"/>
<circle cx="259.5" cy="78.8" r="0.7" fill="#3a3a40"/>
<circle cx="21.9" cy="239.7" r="0.7" fill="#34343a"/>
<circle cx="251.8" cy="129.6" r="0.9" fill="#55524e"/>
<circle cx="192.2" cy="48.2" r="0.5" fill="#3a3a40"/>
<circle cx="24.0" cy="7.4" r="0.6" fill="#45403a"/>
<circle cx="62.1" cy="266.2" r="0.5" fill="#3a3a40"/>
<circle cx="238.9" cy="191.8" r="0.6" fill="#45403a"/>
<circle cx="161.1" cy="151.3" r="0.9" fill="#55524e"/>
<circle cx="250.2" cy="237.5" r="0.6" fill="#34343a"/>
<circle cx="120.7" cy="87.7" r="0.5" fill="#55524e"/>
<circle cx="305.4" cy="208.9" r="0.5" fill="#4a4642"/>
<circle cx="329.3" cy="217.6" r="0.8" fill="#3a3a40"/>
<circle cx="289.3" cy="132.1" r="0.6" fill="#3a3a40"/>
<circle cx="102.0" cy="188.1" r="0.5" fill="#3a3e48"/>
<circle cx="347.6" cy="270.2" r="0.7" fill="#55524e"/>
<circle cx="20.5" cy="185.7" r="0.8" fill="#55524e"/>
<circle cx="307.5" cy="152.8" r="0.7" fill="#3a3e48"/>
<circle cx="250.4" cy="281.8" r="0.6" fill="#3a3a40"/>
<circle cx="343.2" cy="4.4" r="0.7" fill="#45403a"/>
<circle cx="328.3" cy="59.2" r="0.6" fill="#55524e"/>
<circle cx="356.8" cy="56.0" r="0.8" fill="#3a3e48"/>
<circle cx="234.5" cy="110.8" r="0.9" fill="#4a4642"/>
<circle cx="184.1" cy="154.9" r="0.5" fill="#606068"/>
<circle cx="10.3" cy="279.1" r="0.6" fill="#34343a"/>
<circle cx="345.1" cy="230.4" r="0.8" fill="#34343a"/>
<circle cx="228.3" cy="165.0" r="0.6" fill="#45403a"/>
<circle cx="12.8" cy="32.7" r="0.9" fill="#45403a"/>
<circle cx="134.5" cy="41.4" r="0.5" fill="#3a3a40"/>
<circle cx="16.2" cy="202.2" r="0.5" fill="#55524e"/>
<circle cx="26.5" cy="13.6" r="0.9" fill="#606068"/>
<circle cx="141.7" cy="238.7" r="0.9" fill="#55524e"/>
<circle cx="25.7" cy="253.4" r="0.8" fill="#3a3a40"/>
<circle cx="96.2" cy="59.3" r="0.5" fill="#3a3a40"/>
<circle cx="370.2" cy="266.0" r="0.5" fill="#606068"/>
<circle cx="293.1" cy="184.6" r="0.8" fill="#3a3a40"/>
<circle cx="51.7" cy="231.3" r="0.6" fill="#3a3e48"/>
<circle cx="124.5" cy="123.7" r="0.5" fill="#3a3e48"/>
<circle cx="100.1" cy="82.5" r="0.7" fill="#3a3e48"/>
<circle cx="300.0" cy="175.8" r="0.8" fill="#606068"/>
<circle cx="112.2" cy="217.7" r="0.8" fill="#3a3a40"/>
<circle cx="170.2" cy="225.7" r="0.7" fill="#4a4642"/>
<circle cx="274.8" cy="157.1" r="0.6" fill="#55524e"/>
<circle cx="336.3" cy="26.5" r="0.7" fill="#45403a"/>
<circle cx="170.1" cy="152.9" r="0.7" fill="#606068"/>
<circle cx="292.7" cy="15.8" r="0.7" fill="#4a4642"/>
<circle cx="37.3" cy="203.0" r="0.6" fill="#4a4642"/>
<circle cx="231.1" cy="279.5" r="0.9" fill="#3a3e48"/>
<circle cx="225.4" cy="46.4" r="0.6" fill="#55524e"/>
<circle cx="90.3" cy="48.4" r="0.5" fill="#4a4642"/>
<circle cx="307.3" cy="203.6" r="0.5" fill="#55524e"/>
<circle cx="127.4" cy="27.8" r="0.8" fill="#55524e"/>
<circle cx="33.6" cy="259.4" r="0.5" fill="#3a3e48"/>
<circle cx="80.4" cy="76.9" r="0.9" fill="#34343a"/>
<circle cx="66.7" cy="286.9" r="0.6" fill="#4a4642"/>
<circle cx="49.5" cy="173.5" r="0.9" fill="#55524e"/>
<circle cx="13.2" cy="169.8" r="0.9" fill="#45403a"/>
<circle cx="338.5" cy="131.5" r="0.9" fill="#55524e"/>
<circle cx="126.1" cy="135.2" r="0.7" fill="#34343a"/>
<circle cx="90.1" cy="97.5" r="0.6" fill="#34343a"/>
<circle cx="74.7" cy="88.0" r="0.9" fill="#45403a"/>
<circle cx="282.1" cy="284.6" r="0.7" fill="#34343a"/>
<circle cx="203.6" cy="47.0" r="0.7" fill="#45403a"/>
<circle cx="100.9" cy="278.9" r="0.5" fill="#45403a"/>
<circle cx="375.3" cy="29.7" r="0.8" fill="#45403a"/>
<circle cx="383.7" cy="232.1" r="0.7" fill="#4a4642"/>
<circle cx="106.8" cy="31.9" r="0.5" fill="#3a3e48"/>
<circle cx="80.5" cy="113.4" r="0.5" fill="#3a3a40"/>
<circle cx="155.6" cy="231.0" r="0.6" fill="#34343a"/>
<circle cx="382.5" cy="86.5" r="0.5" fill="#45403a"/>
<circle cx="100.3" cy="215.6" r="0.5" fill="#55524e"/>
<circle cx="94.5" cy="249.0" r="0.9" fill="#34343a"/>
<circle cx="292.1" cy="123.0" r="0.6" fill="#55524e"/>
<circle cx="281.7" cy="257.0" r="0.9" fill="#606068"/>
<circle cx="89.2" cy="53.0" r="0.5" fill="#4a4642"/>
<circle cx="168.7" cy="75.9" r="0.5" fill="#4a4642"/>
<circle cx="94.5" cy="116.8" r="0.6" fill="#3a3e48"/>
<circle cx="331.3" cy="141.0" r="0.5" fill="#34343a"/>
<circle cx="334.8" cy="151.3" r="0.6" fill="#55524e"/>
<circle cx="127.9" cy="3.1" r="0.8" fill="#3a3a40"/>
<circle cx="14.9" cy="158.7" r="0.6" fill="#55524e"/>
<circle cx="304.9" cy="274.7" r="0.9" fill="#3a3e48"/>
<circle cx="39.4" cy="167.8" r="0.9" fill="#45403a"/>
<circle cx="279.7" cy="149.6" r="0.7" fill="#34343a"/>
<circle cx="133.7" cy="216.7" r="0.8" fill="#45403a"/>
<circle cx="386.2" cy="53.7" r="0.9" fill="#606068"/>
<circle cx="363.7" cy="212.9" r="0.9" fill="#3a3e48"/>
<circle cx="248.7" cy="73.7" r="0.8" fill="#4a4642"/>
<circle cx="24.0" cy="22.0" r="0.8" fill="#55524e"/>
<circle cx="272.3" cy="102.8" r="0.7" fill="#3a3a40"/>
<circle cx="87.5" cy="216.5" r="0.9" fill="#45403a"/>
<circle cx="387.7" cy="280.6" r="0.8" fill="#45403a"/>
<circle cx="64.2" cy="271.4" r="0.5" fill="#606068"/>
<circle cx="311.4" cy="56.4" r="0.9" fill="#55524e"/>
<circle cx="88.1" cy="281.4" r="0.7" fill="#55524e"/>
<circle cx="249.1" cy="239.1" r="0.8" fill="#4a4642"/>
<circle cx="388.5" cy="221.9" r="0.6" fill="#606068"/>
<circle cx="325.2" cy="103.6" r="0.6" fill="#3a3e48"/>
<circle cx="274.6" cy="200.7" r="0.8" fill="#55524e"/>
<circle cx="72.5" cy="0.8" r="0.7" fill="#3a3e48"/>
<circle cx="95.5" cy="88.1" r="0.8" fill="#4a4642"/>
<circle cx="167.1" cy="186.1" r="0.7" fill="#45403a"/>
<circle cx="362.2" cy="249.5" r="0.5" fill="#3a3a40"/>
<circle cx="322.9" cy="264.5" r="0.6" fill="#34343a"/>
<circle cx="324.2" cy="184.9" r="0.5" fill="#55524e"/>
<circle cx="4.5" cy="277.9" r="0.7" fill="#3a3e48"/>
<circle cx="237.2" cy="168.9" r="0.6" fill="#45403a"/>
<circle cx="302.8" cy="101.2" r="0.6" fill="#45403a"/>
<circle cx="352.6" cy="231.2" r="0.6" fill="#34343a"/>
<circle cx="347.5" cy="177.6" r="0.5" fill="#55524e"/>
<circle cx="351.6" cy="160.2" r="0.7" fill="#45403a"/>
<circle cx="192.8" cy="62.2" r="0.5" fill="#55524e"/>
<circle cx="327.3" cy="196.0" r="0.5" fill="#34343a"/>
<circle cx="46.2" cy="122.4" r="0.6" fill="#4a4642"/>
<circle cx="192.3" cy="17.1" r="0.8" fill="#45403a"/>
<circle cx="273.2" cy="72.0" r="0.6" fill="#34343a"/>
<circle cx="233.8" cy="214.5" r="0.6" fill="#606068"/>
<circle cx="125.1" cy="203.2" r="0.8" fill="#55524e"/>
<circle cx="115.8" cy="136.0" r="0.8" fill="#4a4642"/>
<circle cx="390.0" cy="197.4" r="0.6" fill="#55524e"/>
<circle cx="140.5" cy="188.8" r="0.5" fill="#34343a"/>
<circle cx="17.9" cy="215.1" r="0.7" fill="#606068"/>
<circle cx="382.9" cy="149.1" r="0.8" fill="#606068"/>
<circle cx="350.0" cy="9.9" r="0.8" fill="#55524e"/>
<circle cx="49.5" cy="27.6" r="0.7" fill="#3a3e48"/>
<circle cx="185.1" cy="153.5" r="0.6" fill="#3a3e48"/>
<circle cx="169.7" cy="123.3" r="0.9" fill="#3a3a40"/>
<circle cx="322.4" cy="85.5" r="0.8" fill="#4a4642"/>
<circle cx="130.2" cy="287.4" r="0.9" fill="#3a3e48"/>
<circle cx="380.2" cy="191.1" r="0.5" fill="#3a3e48"/>
<circle cx="75.0" cy="208.2" r="0.6" fill="#34343a"/>
<circle cx="379.4" cy="25.6" r="0.5" fill="#4a4642"/>
<circle cx="281.8" cy="258.6" r="0.9" fill="#34343a"/>
<circle cx="19.4" cy="87.7" r="0.5" fill="#3a3a40"/>
<circle cx="74.1" cy="269.1" r="0.9" fill="#606068"/>
<circle cx="256.6" cy="230.4" r="0.9" fill="#34343a"/>
<circle cx="146.7" cy="42.9" r="0.9" fill="#55524e"/>
<circle cx="32.4" cy="11.5" r="0.8" fill="#55524e"/>
<circle cx="297.4" cy="29.6" r="0.6" fill="#606068"/>
<circle cx="14.4" cy="226.2" r="0.5" fill="#3a3e48"/>
<circle cx="340.0" cy="40.5" r="0.7" fill="#34343a"/>
<circle cx="277.0" cy="251.8" r="0.6" fill="#4a4642"/>
<circle cx="13.4" cy="6.0" r="0.9" fill="#55524e"/>
<circle cx="225.5" cy="266.8" r="0.8" fill="#34343a"/>
<circle cx="203.6" cy="240.8" r="0.8" fill="#34343a"/>
<circle cx="271.3" cy="118.2" r="0.5" fill="#3a3a40"/>
<circle cx="265.2" cy="173.4" r="0.6" fill="#4a4642"/>
<circle cx="300.3" cy="160.3" r="0.5" fill="#55524e"/>
<circle cx="184.2" cy="261.6" r="0.5" fill="#4a4642"/>
<circle cx="1.9" cy="199.7" r="0.5" fill="#606068"/>
<circle cx="34.4" cy="253.9" r="0.6" fill="#4a4642"/>
<circle cx="6.9" cy="210.1" r="0.6" fill="#4a4642"/>
<circle cx="286.1" cy="54.7" r="0.5" fill="#3a3e48"/>
<circle cx="301.9" cy="208.4" r="0.6" fill="#55524e"/>
<circle cx="296.1" cy="85.6" r="0.9" fill="#55524e"/>
<circle cx="194.3" cy="195.5" r="0.7" fill="#3a3a40"/>
<circle cx="279.7" cy="3.3" r="0.5" fill="#55524e"/>
<circle cx="267.8" cy="180.5" r="0.8" fill="#3a3e48"/>
<circle cx="121.9" cy="175.2" r="0.8" fill="#34343a"/>
<circle cx="23.3" cy="107.3" r="0.9" fill="#55524e"/>
<circle cx="171.1" cy="197.6" r="0.6" fill="#606068"/>
<circle cx="45.5" cy="278.5" r="0.6" fill="#55524e"/>
<circle cx="312.7" cy="139.3" r="0.8" fill="#3a3e48"/>
<circle cx="306.0" cy="165.5" r="0.7" fill="#3a3e48"/>
<circle cx="23.6" cy="284.4" r="0.9" fill="#3a3e48"/>
<circle cx="339.1" cy="211.9" r="0.5" fill="#606068"/>
<circle cx="58.9" cy="243.1" r="0.9" fill="#4a4642"/>
<circle cx="380.8" cy="71.9" r="0.8" fill="#55524e"/>
<circle cx="146.7" cy="225.3" r="0.6" fill="#606068"/>
<circle cx="176.0" cy="201.1" r="0.7" fill="#3a3e48"/>
<circle cx="104.5" cy="45.9" r="0.5" fill="#3a3e48"/>
<circle cx="325.0" cy="237.0" r="0.9" fill="#45403a"/>
<circle cx="106.8" cy="248.5" r="0.9" fill="#55524e"/>
<circle cx="303.0" cy="146.0" r="0.9" fill="#3a3a40"/>
<circle cx="210.6" cy="141.6" r="0.8" fill="#45403a"/>
<circle cx="307.2" cy="210.9" r="0.6" fill="#3a3e48"/>
<circle cx="236.7" cy="197.9" r="0.8" fill="#55524e"/>
<circle cx="80.6" cy="74.4" r="0.5" fill="#606068"/>
<circle cx="150.1" cy="157.8" r="0.9" fill="#606068"/>
<circle cx="138.5" cy="18.3" r="0.8" fill="#34343a"/>
<circle cx="203.2" cy="75.8" r="0.9" fill="#3a3e48"/>
<circle cx="185.9" cy="172.1" r="0.6" fill="#45403a"/>
<circle cx="75.0" cy="52.8" r="0.7" fill="#3a3e48"/>
<circle cx="225.4" cy="104.8" r="0.9" fill="#606068"/>
<circle cx="58.1" cy="13.0" r="0.8" fill="#3a3e48"/>
<circle cx="337.9" cy="108.5" r="0.8" fill="#606068"/>
<circle cx="31.9" cy="92.2" r="0.5" fill="#3a3e48"/>
<circle cx="109.4" cy="177.3" r="0.5" fill="#3a3a40"/>
<circle cx="79.8" cy="254.3" r="0.9" fill="#4a4642"/>
<circle cx="228.8" cy="62.4" r="0.7" fill="#4a4642"/>
<circle cx="37.9" cy="130.5" r="0.9" fill="#606068"/>
<circle cx="237.4" cy="38.2" r="0.5" fill="#3a3e48"/>
<circle cx="78.4" cy="52.8" r="0.5" fill="#3a3a40"/>
<circle cx="19.9" cy="162.8" r="0.8" fill="#4a4642"/>
<circle cx="369.4" cy="265.7" r="0.5" fill="#606068"/>
<circle cx="233.2" cy="116.0" r="0.5" fill="#55524e"/>
<circle cx="374.1" cy="75.1" r="0.9" fill="#45403a"/>
<circle cx="249.8" cy="279.3" r="0.9" fill="#4a4642"/>
<circle cx="71.2" cy="248.1" r="0.7" fill="#45403a"/>
<circle cx="386.8" cy="64.7" r="0.5" fill="#3a3e48"/>
<circle cx="367.1" cy="17.3" r="0.9" fill="#3a3a40"/>
<circle cx="326.5" cy="13.7" r="0.9" fill="#55524e"/>
<circle cx="288.4" cy="222.4" r="0.8" fill="#3a3a40"/>
<circle cx="39.4" cy="92.8" r="0.5" fill="#45403a"/>
<circle cx="264.0" cy="87.2" r="0.9" fill="#4a4642"/>
<circle cx="295.6" cy="30.8" r="0.7" fill="#3a3e48"/>
<circle cx="100.2" cy="36.2" r="0.8" fill="#4a4642"/>
<circle cx="65.7" cy="69.6" r="0.6" fill="#55524e"/>
<circle cx="347.9" cy="136.6" r="0.6" fill="#606068"/>
<circle cx="14.0" cy="270.9" r="0.6" fill="#3a3a40"/>
<circle cx="364.3" cy="253.1" r="0.6" fill="#606068"/>
<circle cx="174.4" cy="28.3" r="0.8" fill="#606068"/>
<circle cx="8.5" cy="21.9" r="0.7" fill="#3a3e48"/>
<circle cx="321.0" cy="139.4" r="0.7" fill="#45403a"/>
<circle cx="129.5" cy="214.9" r="0.6" fill="#55524e"/>
<circle cx="176.0" cy="259.7" r="0.8" fill="#606068"/>
<circle cx="58.3" cy="122.1" r="0.6" fill="#45403a"/>
<circle cx="9.9" cy="166.7" r="0.7" fill="#3a3e48"/>
<circle cx="313.6" cy="76.1" r="0.5" fill="#3a3e48"/>
<circle cx="177.9" cy="140.9" r="0.6" fill="#34343a"/>
<circle cx="22.2" cy="261.4" r="0.6" fill="#34343a"/>
<circle cx="186.2" cy="83.6" r="0.7" fill="#606068"/>
<circle cx="78.6" cy="106.4" r="0.7" fill="#45403a"/>
<circle cx="360.8" cy="28.5" r="0.7" fill="#4a4642"/>
<circle cx="349.5" cy="16.8" r="0.7" fill="#45403a"/>
<circle cx="381.7" cy="4.7" r="0.9" fill="#3a3e48"/>
<circle cx="199.2" cy="129.4" r="0.9" fill="#3a3e48"/>
<circle cx="72.5" cy="127.1" r="0.8" fill="#45403a"/>
<circle cx="108.0" cy="52.8" r="0.6" fill="#34343a"/>
<circle cx="300.5" cy="207.8" r="0.6" fill="#34343a"/>
<circle cx="30.9" cy="25.5" r="0.9" fill="#55524e"/>
<circle cx="193.2" cy="80.0" r="0.6" fill="#45403a"/>
<circle cx="238.8" cy="206.7" r="0.6" fill="#34343a"/>
<circle cx="120.1" cy="2.9" r="0.9" fill="#4a4642"/>
<circle cx="328.0" cy="267.5" r="0.9" fill="#606068"/>
<circle cx="135.6" cy="82.3" r="0.8" fill="#3a3a40"/>
<circle cx="6.0" cy="265.8" r="0.8" fill="#45403a"/>
<circle cx="340.1" cy="77.7" r="0.6" fill="#34343a"/>
<circle cx="324.3" cy="107.2" r="0.6" fill="#55524e"/>
<circle cx="144.8" cy="173.7" r="0.5" fill="#3a3e48"/>
<circle cx="202.7" cy="130.2" r="0.9" fill="#3a3a40"/>
<circle cx="47.1" cy="208.7" r="0.7" fill="#606068"/>
<circle cx="277.4" cy="111.4" r="0.5" fill="#3a3e48"/>
<circle cx="340.4" cy="278.6" r="0.8" fill="#4a4642"/>
<circle cx="200.2" cy="154.9" r="0.9" fill="#45403a"/>
<circle cx="8.1" cy="282.5" r="0.6" fill="#34343a"/>
<circle cx="71.1" cy="30.0" r="0.7" fill="#34343a"/>
<circle cx="318.7" cy="8.8" r="0.5" fill="#55524e"/>
<circle cx="288.1" cy="76.3" r="0.9" fill="#55524e"/>
<circle cx="224.8" cy="152.7" r="0.8" fill="#3a3a40"/>
<circle cx="136.8" cy="27.4" r="0.6" fill="#3a3a40"/>
<circle cx="106.5" cy="135.7" r="0.9" fill="#34343a"/>
<circle cx="297.0" cy="32.1" r="0.5" fill="#4a4642"/>
<circle cx="344.9" cy="158.1" r="0.6" fill="#606068"/>
<circle cx="88.5" cy="195.3" r="0.8" fill="#55524e"/>
<circle cx="154.7" cy="276.9" r="0.5" fill="#55524e"/>
<circle cx="151.6" cy="122.8" r="0.9" fill="#34343a"/>
<circle cx="14.1" cy="283.4" r="0.5" fill="#606068"/>
<circle cx="141.7" cy="117.0" r="0.7" fill="#55524e"/>
<circle cx="169.9" cy="286.5" r="0.7" fill="#606068"/>
<circle cx="156.2" cy="163.8" r="0.7" fill="#34343a"/>
<circle cx="57.2" cy="198.6" r="0.7" fill="#45403a"/>
<circle cx="339.5" cy="193.6" r="0.5" fill="#3a3e48"/>
<circle cx="42.5" cy="54.7" r="0.7" fill="#4a4642"/>
<circle cx="78.3" cy="195.4" r="0.6" fill="#45403a"/>
<circle cx="164.1" cy="115.9" r="0.8" fill="#55524e"/>
<circle cx="18.2" cy="286.2" r="0.5" fill="#3a3a40"/>
<circle cx="337.6" cy="181.3" r="0.9" fill="#3a3e48"/>
<circle cx="245.0" cy="235.4" r="0.5" fill="#34343a"/>
<circle cx="39.2" cy="35.5" r="0.5" fill="#4a4642"/>
<circle cx="92.3" cy="11.5" r="0.5" fill="#3a3e48"/>
<circle cx="135.5" cy="48.8" r="0.5" fill="#34343a"/>
<circle cx="374.0" cy="268.9" r="0.7" fill="#3a3a40"/>
<circle cx="181.9" cy="155.9" r="0.6" fill="#4a4642"/>
<circle cx="48.3" cy="38.4" r="0.7" fill="#4a4642"/>
<circle cx="225.2" cy="80.0" r="0.5" fill="#55524e"/>
<circle cx="213.1" cy="245.2" r="0.9" fill="#55524e"/>
<circle cx="222.4" cy="189.9" r="0.6" fill="#34343a"/>
<circle cx="277.0" cy="134.6" r="0.9" fill="#3a3e48"/>
<circle cx="239.0" cy="136.9" r="0.7" fill="#3a3a40"/>
<circle cx="94.5" cy="64.7" r="0.9" fill="#34343a"/>
<circle cx="149.4" cy="171.0" r="0.5" fill="#3a3e48"/>
<circle cx="63.3" cy="278.0" r="0.7" fill="#34343a"/>
<circle cx="126.9" cy="78.8" r="0.6" fill="#3a3e48"/>
<circle cx="22.2" cy="6.4" r="0.9" fill="#3a3a40"/>
<circle cx="236.3" cy="101.6" r="0.5" fill="#34343a"/>
<circle cx="151.3" cy="128.4" r="0.5" fill="#34343a"/>
<circle cx="87.8" cy="280.1" r="0.6" fill="#4a4642"/>
<circle cx="131.4" cy="102.9" r="0.6" fill="#34343a"/>
<circle cx="238.2" cy="80.8" r="0.9" fill="#3a3a40"/>
<circle cx="288.1" cy="217.0" r="0.8" fill="#3a3e48"/>
<circle cx="306.1" cy="206.9" r="0.6" fill="#4a4642"/>
<circle cx="339.6" cy="1.3" r="0.9" fill="#34343a"/>
<circle cx="45.8" cy="116.1" r="0.9" fill="#45403a"/>
<circle cx="163.0" cy="228.8" r="0.9" fill="#34343a"/>
<circle cx="43.3" cy="248.7" r="0.8" fill="#3a3e48"/>
<circle cx="282.0" cy="85.5" r="0.8" fill="#34343a"/>
<circle cx="216.6" cy="112.3" r="0.7" fill="#3a3a40"/>
<circle cx="307.0" cy="248.1" r="0.8" fill="#4a4642"/>
<circle cx="173.2" cy="53.8" r="0.7" fill="#606068"/>
<circle cx="56.5" cy="168.0" r="0.9" fill="#45403a"/>
<circle cx="34.3" cy="268.7" r="0.7" fill="#606068"/>
<circle cx="237.2" cy="70.9" r="0.7" fill="#45403a"/>
<circle cx="379.1" cy="260.2" r="0.5" fill="#3a3a40"/>
<circle cx="18.5" cy="165.0" r="0.8" fill="#3a3e48"/>
<circle cx="358.9" cy="225.9" r="0.9" fill="#34343a"/>
<circle cx="389.3" cy="151.1" r="0.9" fill="#55524e"/>
<circle cx="267.2" cy="113.7" r="0.7" fill="#3a3a40"/>
<circle cx="231.9" cy="102.5" r="0.5" fill="#55524e"/>
<circle cx="26.6" cy="66.9" r="0.8" fill="#3a3e48"/>
<circle cx="195.4" cy="189.4" r="0.9" fill="#45403a"/>
<circle cx="343.1" cy="281.6" r="0.8" fill="#4a4642"/>
<circle cx="171.7" cy="182.4" r="0.9" fill="#3a3e48"/>
<circle cx="269.7" cy="218.0" r="0.5" fill="#45403a"/>
<circle cx="141.5" cy="107.1" r="0.5" fill="#606068"/>
<circle cx="121.1" cy="51.3" r="0.7" fill="#55524e"/>
<circle cx="133.9" cy="273.1" r="0.9" fill="#4a4642"/>
<circle cx="246.1" cy="153.0" r="0.9" fill="#45403a"/>
<circle cx="196.9" cy="54.9" r="0.6" fill="#3a3a40"/>
<circle cx="245.7" cy="176.1" r="0.7" fill="#34343a"/>
<circle cx="387.6" cy="185.9" r="0.5" fill="#55524e"/>
<circle cx="160.5" cy="230.0" r="0.7" fill="#55524e"/>
<circle cx="269.4" cy="1.1" r="0.7" fill="#4a4642"/>
<circle cx="328.4" cy="171.2" r="0.5" fill="#45403a"/>
<circle cx="68.3" cy="224.5" r="0.9" fill="#3a3e48"/>
<circle cx="339.7" cy="261.5" r="0.9" fill="#45403a"/>
<circle cx="224.0" cy="120.0" r="0.5" fill="#45403a"/>
<circle cx="61.1" cy="221.8" r="0.5" fill="#3a3a40"/>
<circle cx="39.0" cy="49.8" r="0.9" fill="#4a4642"/>
<circle cx="321.0" cy="179.0" r="0.5" fill="#55524e"/>
<circle cx="4.9" cy="225.0" r="0.7" fill="#45403a"/>
<circle cx="279.0" cy="103.3" r="0.6" fill="#3a3a40"/>
<circle cx="104.0" cy="29.0" r="0.9" fill="#3a3a40"/>
<circle cx="136.1" cy="131.4" r="0.8" fill="#3a3a40"/>
<circle cx="21.3" cy="260.0" r="0.9" fill="#606068"/>
<circle cx="374.2" cy="128.4" r="0.9" fill="#45403a"/>
<circle cx="97.2" cy="12.8" r="0.9" fill="#606068"/>
<circle cx="67.7" cy="1.8" r="0.8" fill="#3a3e48"/>
<circle cx="163.2" cy="73.6" r="0.8" fill="#3a3a40"/>
<circle cx="94.7" cy="113.8" r="0.9" fill="#45403a"/>
<circle cx="161.3" cy="116.4" r="0.8" fill="#3a3a40"/>
<circle cx="309.2" cy="71.1" r="0.6" fill="#45403a"/>
<circle cx="139.8" cy="54.5" r="0.7" fill="#4a4642"/>
<circle cx="219.0" cy="33.5" r="0.9" fill="#606068"/>
<circle cx="150.4" cy="117.7" r="0.5" fill="#3a3a40"/>
<circle cx="164.7" cy="266.6" r="0.9" fill="#45403a"/>
<circle cx="151.1" cy="136.4" r="0.7" fill="#45403a"/>
<circle cx="169.9" cy="81.5" r="0.5" fill="#3a3e48"/>
<circle cx="313.9" cy="70.6" r="0.6" fill="#3a3a40"/>
<circle cx="76.6" cy="159.1" r="0.6" fill="#34343a"/>
<circle cx="172.9" cy="244.2" r="0.6" fill="#45403a"/>
<circle cx="143.5" cy="63.2" r="0.8" fill="#4a4642"/>
<circle cx="245.4" cy="169.6" r="0.7" fill="#4a4642"/>
<circle cx="196.9" cy="66.4" r="0.8" fill="#55524e"/>
<circle cx="51.1" cy="206.3" r="0.7" fill="#34343a"/>
<circle cx="350.9" cy="171.6" r="0.7" fill="#34343a"/>
<circle cx="96.0" cy="177.6" r="0.6" fill="#45403a"/>
<circle cx="340.2" cy="35.9" r="0.9" fill="#3a3a40"/>
<circle cx="211.6" cy="79.0" r="0.8" fill="#3a3a40"/>
<circle cx="256.4" cy="165.8" r="0.7" fill="#3a3a40"/>
<circle cx="152.1" cy="25.1" r="0.6" fill="#606068"/>
<circle cx="331.9" cy="93.7" r="0.5" fill="#3a3a40"/>
<circle cx="219.2" cy="105.6" r="0.9" fill="#606068"/>
<circle cx="115.8" cy="19.2" r="0.7" fill="#3a3a40"/>
<circle cx="88.3" cy="36.8" r="0.8" fill="#3a3e48"/>
<circle cx="138.8" cy="246.6" r="0.8" fill="#606068"/>
<circle cx="244.9" cy="183.6" r="0.6" fill="#3a3e48"/>
<circle cx="68.8" cy="107.0" r="0.7" fill="#4a4642"/>
<circle cx="9.9" cy="205.5" r="0.8" fill="#45403a"/>
<circle cx="390.0" cy="117.0" r="0.5" fill="#45403a"/>
<circle cx="113.7" cy="79.1" r="0.9" fill="#55524e"/>
<circle cx="85.5" cy="197.8" r="0.8" fill="#3a3a40"/>
<circle cx="237.3" cy="125.8" r="0.7" fill="#45403a"/>
<circle cx="148.5" cy="11.5" r="0.7" fill="#55524e"/>
<circle cx="248.9" cy="52.5" r="0.6" fill="#34343a"/>
<circle cx="194.2" cy="152.1" r="0.8" fill="#55524e"/>
<circle cx="266.9" cy="101.9" r="0.5" fill="#3a3a40"/>
<circle cx="325.4" cy="226.7" r="0.7" fill="#3a3a40"/>
<circle cx="341.3" cy="170.9" r="0.5" fill="#45403a"/>
<circle cx="265.6" cy="10.8" r="0.7" fill="#45403a"/>
<circle cx="303.1" cy="100.9" r="0.5" fill="#4a4642"/>
<circle cx="270.9" cy="114.9" r="0.9" fill="#606068"/>
<circle cx="86.1" cy="154.0" r="0.7" fill="#4a4642"/>
<circle cx="172.6" cy="99.4" r="0.9" fill="#55524e"/>
<circle cx="268.5" cy="245.0" r="0.8" fill="#34343a"/>
<circle cx="21.2" cy="203.9" r="0.8" fill="#55524e"/>
<circle cx="199.6" cy="271.0" r="0.6" fill="#4a4642"/>
<circle cx="297.1" cy="12.8" r="0.9" fill="#3a3e48"/>
<circle cx="68.1" cy="47.8" r="0.6" fill="#34343a"/>
<circle cx="101.5" cy="281.4" r="0.6" fill="#3a3e48"/>
<circle cx="135.4" cy="27.0" r="0.7" fill="#45403a"/>
<circle cx="53.3" cy="206.4" r="0.8" fill="#45403a"/>
<circle cx="275.2" cy="1.7" r="0.8" fill="#45403a"/>
<circle cx="365.0" cy="102.6" r="0.7" fill="#45403a"/>
<circle cx="345.0" cy="41.4" r="0.9" fill="#45403a"/>
<circle cx="130.1" cy="238.1" r="0.9" fill="#4a4642"/>
<circle cx="296.6" cy="49.4" r="0.6" fill="#34343a"/>
<circle cx="381.9" cy="245.1" r="0.8" fill="#606068"/>
<circle cx="80.5" cy="201.5" r="0.5" fill="#3a3e48"/>
<circle cx="189.8" cy="12.7" r="0.7" fill="#3a3e48"/>
<circle cx="76.9" cy="204.9" r="0.8" fill="#3a3a40"/>
<circle cx="62.9" cy="130.0" r="0.9" fill="#3a3e48"/>
<circle cx="112.9" cy="162.8" r="0.5" fill="#3a3a40"/>
<circle cx="182.7" cy="286.1" r="0.8" fill="#3a3a40"/>
<circle cx="291.4" cy="96.9" r="0.9" fill="#3a3e48"/>
<circle cx="42.4" cy="142.8" r="0.8" fill="#4a4642"/>
<circle cx="74.0" cy="158.6" r="0.5" fill="#3a3e48"/>
<circle cx="358.6" cy="188.2" r="0.9" fill="#55524e"/>
<circle cx="254.5" cy="73.4" r="0.6" fill="#3a3a40"/>
<circle cx="54.1" cy="8.1" r="0.8" fill="#606068"/>
<circle cx="56.6" cy="107.4" r="0.9" fill="#606068"/>
<circle cx="349.3" cy="199.2" r="0.5" fill="#606068"/>
<circle cx="280.4" cy="90.6" r="0.9" fill="#3a3e48"/>
<circle cx="148.0" cy="189.0" r="0.7" fill="#3a3e48"/>
<circle cx="89.8" cy="39.8" r="0.7" fill="#606068"/>
<circle cx="324.2" cy="69.9" r="0.5" fill="#3a3a40"/>
<circle cx="221.1" cy="183.4" r="0.8" fill="#3a3a40"/>
<circle cx="368.5" cy="144.4" r="0.8" fill="#55524e"/>
<circle cx="61.4" cy="87.5" r="0.9" fill="#55524e"/>
<circle cx="31.3" cy="200.9" r="0.6" fill="#45403a"/>
<circle cx="172.8" cy="283.2" r="0.5" fill="#3a3a40"/>
<circle cx="331.8" cy="140.0" r="0.6" fill="#55524e"/>
<circle cx="145.3" cy="9.4" r="0.9" fill="#606068"/>
<circle cx="325.1" cy="149.3" r="0.6" fill="#3a3e48"/>
<circle cx="28.1" cy="16.1" r="0.8" fill="#3a3e48"/>
<circle cx="24.5" cy="2.6" r="0.6" fill="#55524e"/>
<circle cx="64.1" cy="86.4" r="0.8" fill="#606068"/>
<circle cx="219.7" cy="101.6" r="0.6" fill="#4a4642"/>
<circle cx="33.2" cy="94.5" r="0.8" fill="#4a4642"/>
<circle cx="378.8" cy="265.3" r="0.6" fill="#4a4642"/>
<circle cx="375.1" cy="181.0" r="0.5" fill="#55524e"/>
<circle cx="263.8" cy="177.9" r="0.7" fill="#34343a"/>
<circle cx="222.7" cy="278.2" r="0.8" fill="#55524e"/>
<circle cx="252.5" cy="87.4" r="0.7" fill="#34343a"/>
<circle cx="345.2" cy="8.1" r="0.6" fill="#45403a"/>
<circle cx="264.7" cy="130.6" r="0.5" fill="#45403a"/>
<circle cx="257.6" cy="108.6" r="0.9" fill="#4a4642"/>
<circle cx="140.4" cy="70.1" r="0.8" fill="#4a4642"/>
<circle cx="101.8" cy="66.4" r="0.6" fill="#34343a"/>
<circle cx="292.4" cy="64.6" r="0.7" fill="#55524e"/>
<circle cx="37.0" cy="155.0" r="0.7" fill="#55524e"/>
<circle cx="190.8" cy="161.8" r="0.6" fill="#34343a"/>
<circle cx="223.4" cy="33.0" r="0.9" fill="#34343a"/>
<circle cx="221.1" cy="248.6" r="0.5" fill="#606068"/>
<circle cx="171.4" cy="252.1" r="0.9" fill="#34343a"/>
<circle cx="278.7" cy="221.0" r="0.5" fill="#55524e"/>
<circle cx="386.4" cy="210.7" r="0.5" fill="#4a4642"/>
<circle cx="323.8" cy="114.5" r="0.6" fill="#45403a"/>
<circle cx="219.6" cy="226.3" r="0.6" fill="#3a3e48"/>
<circle cx="302.7" cy="16.8" r="0.6" fill="#3a3a40"/>
<circle cx="145.2" cy="4.4" r="0.9" fill="#45403a"/>
<circle cx="179.3" cy="35.2" r="0.6" fill="#4a4642"/>
<circle cx="354.3" cy="25.6" r="0.6" fill="#34343a"/>
<circle cx="44.7" cy="212.6" r="0.7" fill="#45403a"/>
<circle cx="143.1" cy="245.7" r="0.5" fill="#606068"/>
<circle cx="99.7" cy="69.9" r="0.9" fill="#55524e"/>
<circle cx="204.6" cy="104.2" r="0.8" fill="#3a3a40"/>
<circle cx="318.5" cy="103.2" r="0.7" fill="#34343a"/>
<circle cx="127.7" cy="176.1" r="0.5" fill="#55524e"/>
<circle cx="94.6" cy="103.5" r="0.8" fill="#3a3a40"/>
<circle cx="326.9" cy="169.8" r="0.5" fill="#606068"/>
<circle cx="8.2" cy="32.2" r="0.7" fill="#45403a"/>
<circle cx="58.6" cy="271.9" r="0.8" fill="#606068"/>
<circle cx="56.3" cy="255.6" r="0.9" fill="#55524e"/>
<circle cx="297.0" cy="78.5" r="0.8" fill="#3a3a40"/>
<circle cx="9.7" cy="290.4" r="0.8" fill="#34343a"/>
<circle cx="188.7" cy="9.2" r="0.5" fill="#3a3a40"/>
<circle cx="71.1" cy="238.9" r="0.9" fill="#4a4642"/>
<circle cx="328.8" cy="282.5" r="0.8" fill="#4a4642"/>
<circle cx="89.4" cy="279.7" r="0.9" fill="#3a3a40"/>
<circle cx="140.8" cy="154.3" r="0.7" fill="#45403a"/>
<circle cx="229.8" cy="12.7" r="0.6" fill="#606068"/>
<circle cx="140.8" cy="136.6" r="0.9" fill="#4a4642"/>
<circle cx="151.3" cy="103.3" r="0.5" fill="#3a3e48"/>
<circle cx="225.9" cy="97.5" r="0.5" fill="#45403a"/>
<circle cx="179.2" cy="288.0" r="0.5" fill="#55524e"/>
<circle cx="56.9" cy="195.9" r="0.7" fill="#4a4642"/>
<circle cx="106.6" cy="146.0" r="0.7" fill="#3a3e48"/>
<circle cx="221.9" cy="154.2" r="0.6" fill="#55524e"/>
<circle cx="13.3" cy="163.7" r="0.5" fill="#606068"/>
<circle cx="77.7" cy="124.5" r="0.9" fill="#55524e"/>
<circle cx="38.6" cy="231.2" r="0.6" fill="#606068"/>
<circle cx="310.7" cy="41.2" r="0.5" fill="#3a3e48"/>
<circle cx="375.6" cy="99.7" r="0.7" fill="#34343a"/>
<circle cx="332.7" cy="71.6" r="0.9" fill="#55524e"/>
<circle cx="158.3" cy="17.7" r="0.7" fill="#55524e"/>
<circle cx="126.0" cy="288.6" r="0.8" fill="#34343a"/>
<circle cx="143.2" cy="71.1" r="0.6" fill="#3a3e48"/>
<circle cx="58.8" cy="60.0" r="0.8" fill="#4a4642"/>
<circle cx="173.8" cy="166.1" r="0.7" fill="#45403a"/>
<circle cx="228.8" cy="42.0" r="0.7" fill="#3a3e48"/>
<circle cx="283.4" cy="161.0" r="0.7" fill="#3a3a40"/>
<circle cx="359.3" cy="170.3" r="0.5" fill="#34343a"/>
<circle cx="69.7" cy="169.5" r="0.8" fill="#3a3e48"/>
<circle cx="378.5" cy="201.6" r="0.5" fill="#606068"/>
<circle cx="189.0" cy="262.5" r="0.7" fill="#3a3e48"/>
<circle cx="213.1" cy="221.5" r="0.7" fill="#45403a"/>
<circle cx="274.7" cy="63.7" r="0.8" fill="#4a4642"/>
<circle cx="78.1" cy="176.0" r="0.9" fill="#55524e"/>
<circle cx="38.8" cy="70.6" r="0.5" fill="#45403a"/>
<circle cx="234.4" cy="23.2" r="0.9" fill="#3a3e48"/>
<circle cx="280.4" cy="1.5" r="0.7" fill="#34343a"/>
<circle cx="250.6" cy="4.4" r="0.7" fill="#3a3a40"/>
<circle cx="82.8" cy="95.4" r="0.5" fill="#55524e"/>
<circle cx="189.7" cy="178.1" r="0.7" fill="#45403a"/>
<circle cx="22.4" cy="121.0" r="0.5" fill="#3a3a40"/>
<circle cx="244.3" cy="97.7" r="0.8" fill="#34343a"/>
<circle cx="155.8" cy="274.5" r="0.5" fill="#3a3a40"/>
<circle cx="360.9" cy="164.7" r="0.7" fill="#3a3a40"/>
<circle cx="161.9" cy="207.4" r="0.7" fill="#45403a"/>
<circle cx="36.4" cy="45.6" r="0.6" fill="#34343a"/>
<circle cx="299.2" cy="26.2" r="0.7" fill="#4a4642"/>
<circle cx="134.2" cy="198.6" r="0.9" fill="#45403a"/>
<circle cx="256.4" cy="175.7" r="0.7" fill="#45403a"/>
<circle cx="289.0" cy="75.3" r="0.8" fill="#606068"/>
<circle cx="12.3" cy="189.0" r="0.9" fill="#55524e"/>
<circle cx="176.7" cy="81.3" r="0.9" fill="#34343a"/>
<circle cx="367.0" cy="38.5" r="0.5" fill="#34343a"/>
<circle cx="185.5" cy="191.4" r="0.7" fill="#45403a"/>
<circle cx="385.9" cy="66.6" r="0.5" fill="#3a3a40"/>
<circle cx="243.6" cy="35.7" r="0.9" fill="#34343a"/>
<circle cx="79.9" cy="227.0" r="0.7" fill="#34343a"/>
<circle cx="142.6" cy="43.6" r="0.6" fill="#606068"/>
<circle cx="287.7" cy="269.1" r="0.6" fill="#34343a"/>
<circle cx="11.3" cy="227.2" r="0.6" fill="#4a4642"/>
<circle cx="383.1" cy="145.7" r="0.7" fill="#606068"/>
<circle cx="151.7" cy="61.9" r="0.5" fill="#3a3a40"/>
<circle cx="257.4" cy="4.5" r="0.8" fill="#55524e"/>
<circle cx="337.0" cy="17.5" r="0.9" fill="#4a4642"/>
<circle cx="159.9" cy="268.4" r="0.6" fill="#3a3a40"/>
<circle cx="98.3" cy="76.6" r="0.8" fill="#45403a"/>
<circle cx="90.2" cy="59.3" r="0.8" fill="#55524e"/>
<circle cx="108.7" cy="256.8" r="0.8" fill="#45403a"/>
<circle cx="382.7" cy="230.9" r="0.8" fill="#606068"/>
<circle cx="364.2" cy="224.6" r="0.6" fill="#606068"/>
<circle cx="117.0" cy="25.8" r="0.5" fill="#4a4642"/>
<circle cx="340.1" cy="72.9" r="0.7" fill="#55524e"/>
<circle cx="238.0" cy="279.4" r="0.6" fill="#34343a"/>
<circle cx="20.3" cy="228.4" r="0.7" fill="#3a3a40"/>
<circle cx="304.1" cy="252.1" r="0.6" fill="#4a4642"/>
<circle cx="336.9" cy="290.5" r="0.7" fill="#55524e"/>
<circle cx="9.5" cy="32.6" r="0.5" fill="#45403a"/>
<circle cx="355.5" cy="44.0" r="0.7" fill="#3a3a40"/>
<circle cx="293.0" cy="135.6" r="0.8" fill="#3a3a40"/>
<circle cx="161.5" cy="187.5" r="0.8" fill="#3a3e48"/>
<circle cx="382.1" cy="9.6" r="0.6" fill="#45403a"/>
<circle cx="308.9" cy="201.3" r="0.5" fill="#45403a"/>
<circle cx="196.9" cy="67.6" r="0.8" fill="#55524e"/>
<circle cx="40.9" cy="5.8" r="0.7" fill="#3a3a40"/>
<circle cx="342.6" cy="35.2" r="0.8" fill="#45403a"/>
<circle cx="204.9" cy="0.8" r="0.6" fill="#55524e"/>
<circle cx="210.8" cy="184.9" r="0.9" fill="#34343a"/>
<circle cx="387.4" cy="154.7" r="0.8" fill="#3a3a40"/>
<circle cx="136.3" cy="62.8" r="0.6" fill="#55524e"/>
<circle cx="28.2" cy="205.4" r="0.5" fill="#3a3e48"/>
<circle cx="104.9" cy="282.2" r="0.6" fill="#34343a"/>
<circle cx="18.7" cy="230.5" r="0.7" fill="#3a3e48"/>
<circle cx="4.1" cy="200.9" r="0.8" fill="#34343a"/>
<circle cx="110.0" cy="96.6" r="0.8" fill="#606068"/>
<circle cx="290.7" cy="78.4" r="0.8" fill="#3a3e48"/>
<circle cx="210.6" cy="111.8" r="0.6" fill="#4a4642"/>
<circle cx="296.8" cy="257.5" r="0.6" fill="#55524e"/>
<circle cx="2.0" cy="177.5" r="0.7" fill="#55524e"/>
<circle cx="238.3" cy="110.1" r="0.6" fill="#606068"/>
<circle cx="77.4" cy="33.9" r="0.9" fill="#606068"/>
<circle cx="13.1" cy="209.2" r="0.8" fill="#55524e"/>
<circle cx="217.8" cy="200.0" r="0.8" fill="#34343a"/>
<circle cx="260.5" cy="133.0" r="0.9" fill="#3a3a40"/>
<circle cx="184.7" cy="189.0" r="0.8" fill="#34343a"/>
<circle cx="133.5" cy="159.5" r="0.8" fill="#45403a"/>
<circle cx="321.7" cy="231.1" r="0.8" fill="#3a3e48"/>
<circle cx="277.7" cy="114.9" r="0.9" fill="#3a3e48"/>
<circle cx="239.0" cy="197.7" r="0.7" fill="#3a3a40"/>
<circle cx="245.3" cy="158.6" r="0.6" fill="#34343a"/>
<circle cx="298.5" cy="76.6" r="0.8" fill="#606068"/>
<circle cx="281.4" cy="152.4" r="0.8" fill="#34343a"/>
<circle cx="86.3" cy="41.5" r="0.9" fill="#3a3e48"/>
<circle cx="204.3" cy="154.0" r="0.7" fill="#45403a"/>
</g>
<g transform="translate(195,145.5)">
<defs><filter id="turb" x="-60" y="-80" width="120" height="160" filterUnits="userSpaceOnUse"><feTurbulence type="fractalNoise" baseFrequency="0.22" numOctaves="2" seed="11"/><feColorMatrix type="matrix" values="0 0 0 0 0.78  0 0 0 0 0.80  0 0 0 0 0.86  2.2 0 0 0 -0.9"/><feComposite in2="SourceGraphic" operator="in"/></filter><radialGradient id="gg" cx="0.5" cy="0.5" r="0.5"><stop offset="0" stop-color="#fff" stop-opacity="1"/><stop offset="0.6" stop-color="#fff" stop-opacity="0.6"/><stop offset="1" stop-color="#fff" stop-opacity="0"/></radialGradient></defs>
<ellipse cx="4" cy="4" rx="50" ry="85" transform="rotate(-24)" fill="#262a34" opacity="0.22" filter="url(#b8)"/>
<ellipse cx="3" cy="6" rx="36" ry="62" transform="rotate(-26)" fill="#2e323c" opacity="0.35" filter="url(#b8)"/>
<ellipse cx="1" cy="2" rx="27" ry="52" transform="rotate(-26)" fill="#565c6c" opacity="0.28" filter="url(#b5)"/>
<path d="M-30,-54 C-6,-48 -26,-18 0,0 C26,18 36,30 10,56" stroke="#8a92a4" stroke-width="9" fill="none" opacity="0.3" filter="url(#b3)"/>
<path d="M-4,-48 C10,-40 18,-22 14,-6 M4,44 C-10,38 -18,22 -14,6" stroke="#7a8294" stroke-width="6" fill="none" opacity="0.22" filter="url(#b3)"/>
<ellipse cx="0" cy="1" rx="15" ry="23" transform="rotate(-30)" fill="#a8aab2" opacity="0.45" filter="url(#b3)"/>
<ellipse cx="1" cy="2" rx="30" ry="50" transform="rotate(-28)" fill="url(#gg)" opacity="0.17" filter="url(#turb)"/>
<circle cx="-12.7" cy="-11.8" r="1.0" fill="#c4c8d2" opacity="0.55"/>
<circle cx="8.5" cy="-14.9" r="0.8" fill="#b0b6c4" opacity="0.55"/>
<circle cx="-0.7" cy="16.1" r="0.8" fill="#b0b6c4" opacity="0.55"/>
<circle cx="24.8" cy="19.2" r="0.8" fill="#a0a8b8" opacity="0.55"/>
<circle cx="17.5" cy="7.0" r="0.8" fill="#98a0b4" opacity="0.55"/>
<circle cx="-10.7" cy="16.7" r="0.8" fill="#b0b6c4" opacity="0.55"/>
<circle cx="-3.4" cy="25.8" r="1.0" fill="#d0d0d8" opacity="0.55"/>
<circle cx="-0.3" cy="0.3" r="1.0" fill="#c4c8d2" opacity="0.55"/>
<circle cx="6.3" cy="4.7" r="1.0" fill="#98a0b4" opacity="0.55"/>
<circle cx="10.3" cy="16.0" r="1.0" fill="#a0a8b8" opacity="0.55"/>
<circle cx="0.5" cy="2.7" r="0.6" fill="#c4c8d2" opacity="0.55"/>
<circle cx="-1.9" cy="-0.3" r="1.0" fill="#b0b6c4" opacity="0.55"/>
<circle cx="2.4" cy="2.3" r="0.8" fill="#a0a8b8" opacity="0.55"/>
<circle cx="9.1" cy="14.7" r="0.6" fill="#d0d0d8" opacity="0.55"/>
<circle cx="-5.5" cy="1.5" r="0.8" fill="#c4c8d2" opacity="0.55"/>
<circle cx="0.1" cy="-0.2" r="1.0" fill="#a0a8b8" opacity="0.55"/>
<circle cx="-12.0" cy="-27.8" r="0.8" fill="#d0d0d8" opacity="0.55"/>
<circle cx="10.5" cy="-1.0" r="0.8" fill="#a0a8b8" opacity="0.55"/>
<circle cx="-3.4" cy="8.4" r="0.8" fill="#c4c8d2" opacity="0.55"/>
<circle cx="-1.1" cy="-9.3" r="1.0" fill="#c4c8d2" opacity="0.55"/>
<circle cx="22.2" cy="24.0" r="0.6" fill="#a0a8b8" opacity="0.55"/>
<circle cx="-4.3" cy="-3.7" r="0.6" fill="#a0a8b8" opacity="0.55"/>
<circle cx="14.3" cy="3.3" r="0.8" fill="#d0d0d8" opacity="0.55"/>
<circle cx="2.0" cy="-4.5" r="0.6" fill="#b0b6c4" opacity="0.55"/>
<circle cx="-16.7" cy="-5.5" r="0.8" fill="#d0d0d8" opacity="0.55"/>
<circle cx="2.8" cy="-1.8" r="0.6" fill="#c4c8d2" opacity="0.55"/>
<circle cx="-7.7" cy="15.6" r="1.0" fill="#b0b6c4" opacity="0.55"/>
<circle cx="0.8" cy="1.2" r="0.8" fill="#c4c8d2" opacity="0.55"/>
<circle cx="-10.2" cy="1.0" r="0.8" fill="#a0a8b8" opacity="0.55"/>
<circle cx="-3.6" cy="-7.4" r="0.6" fill="#b0b6c4" opacity="0.55"/>
<circle cx="21.0" cy="28.6" r="0.8" fill="#b0b6c4" opacity="0.55"/>
<circle cx="13.2" cy="3.9" r="1.0" fill="#c4c8d2" opacity="0.55"/>
<circle cx="-2.3" cy="3.5" r="0.8" fill="#a0a8b8" opacity="0.55"/>
<circle cx="-0.6" cy="-11.2" r="1.0" fill="#98a0b4" opacity="0.55"/>
<circle cx="-3.4" cy="-5.8" r="0.6" fill="#d0d0d8" opacity="0.55"/>
<circle cx="-0.1" cy="-8.3" r="0.8" fill="#c4c8d2" opacity="0.55"/>
<circle cx="0.4" cy="2.2" r="0.8" fill="#98a0b4" opacity="0.55"/>
<circle cx="-0.2" cy="0.1" r="0.8" fill="#b0b6c4" opacity="0.55"/>
<circle cx="-0.5" cy="7.6" r="1.0" fill="#d0d0d8" opacity="0.55"/>
<circle cx="0.9" cy="-12.6" r="0.8" fill="#b0b6c4" opacity="0.55"/>
<circle cx="7.9" cy="24.3" r="0.8" fill="#98a0b4" opacity="0.55"/>
<circle cx="8.7" cy="26.9" r="0.6" fill="#c4c8d2" opacity="0.55"/>
<circle cx="18.2" cy="22.3" r="1.0" fill="#d0d0d8" opacity="0.55"/>
<circle cx="-29.0" cy="-7.5" r="0.8" fill="#a0a8b8" opacity="0.55"/>
<circle cx="15.5" cy="18.0" r="1.0" fill="#b0b6c4" opacity="0.55"/>
<circle cx="3.5" cy="12.4" r="0.6" fill="#98a0b4" opacity="0.55"/>
<circle cx="-2.8" cy="12.8" r="0.6" fill="#a0a8b8" opacity="0.55"/>
<circle cx="-2.6" cy="-7.1" r="0.6" fill="#a0a8b8" opacity="0.55"/>
<circle cx="-5.8" cy="-7.3" r="0.8" fill="#d0d0d8" opacity="0.55"/>
<circle cx="7.5" cy="-17.2" r="0.6" fill="#d0d0d8" opacity="0.55"/>
<circle cx="0.5" cy="-17.8" r="0.6" fill="#b0b6c4" opacity="0.55"/>
<circle cx="5.9" cy="3.9" r="1.0" fill="#b0b6c4" opacity="0.55"/>
<circle cx="-17.6" cy="10.9" r="0.8" fill="#c4c8d2" opacity="0.55"/>
<circle cx="1.8" cy="2.5" r="0.6" fill="#a0a8b8" opacity="0.55"/>
<circle cx="-12.5" cy="2.1" r="1.0" fill="#c4c8d2" opacity="0.55"/>
<circle cx="22.7" cy="8.8" r="0.6" fill="#b0b6c4" opacity="0.55"/>
<circle cx="-8.2" cy="-19.7" r="1.0" fill="#a0a8b8" opacity="0.55"/>
<circle cx="1.0" cy="-5.0" r="0.6" fill="#d0d0d8" opacity="0.55"/>
<circle cx="-0.2" cy="-8.8" r="0.8" fill="#c4c8d2" opacity="0.55"/>
<circle cx="1.9" cy="5.0" r="1.0" fill="#c4c8d2" opacity="0.55"/>
<circle cx="-3.1" cy="-8.6" r="0.8" fill="#a0a8b8" opacity="0.55"/>
<circle cx="7.3" cy="30.6" r="0.6" fill="#c4c8d2" opacity="0.55"/>
<circle cx="2.5" cy="-4.6" r="0.8" fill="#b0b6c4" opacity="0.55"/>
<circle cx="-0.4" cy="11.1" r="0.6" fill="#a0a8b8" opacity="0.55"/>
<circle cx="-3.5" cy="-2.8" r="1.0" fill="#c4c8d2" opacity="0.55"/>
<circle cx="9.1" cy="9.2" r="1.0" fill="#a0a8b8" opacity="0.55"/>
<circle cx="-2.5" cy="14.8" r="1.0" fill="#c4c8d2" opacity="0.55"/>
<circle cx="1.4" cy="-2.9" r="0.6" fill="#98a0b4" opacity="0.55"/>
<circle cx="7.5" cy="19.3" r="0.6" fill="#d0d0d8" opacity="0.55"/>
<circle cx="18.9" cy="22.0" r="0.8" fill="#a0a8b8" opacity="0.55"/>
<circle cx="-6.5" cy="-2.4" r="0.8" fill="#c4c8d2" opacity="0.55"/>
<circle cx="1.0" cy="2.2" r="1.0" fill="#c4c8d2" opacity="0.55"/>
<circle cx="6.6" cy="-19.2" r="0.8" fill="#b0b6c4" opacity="0.55"/>
<circle cx="3.9" cy="4.3" r="1.0" fill="#c4c8d2" opacity="0.55"/>
<circle cx="3.1" cy="8.8" r="0.6" fill="#d0d0d8" opacity="0.55"/>
<circle cx="3.5" cy="16.3" r="0.6" fill="#a0a8b8" opacity="0.55"/>
<circle cx="14.1" cy="6.4" r="0.8" fill="#98a0b4" opacity="0.55"/>
<circle cx="24.6" cy="8.6" r="0.6" fill="#98a0b4" opacity="0.55"/>
<circle cx="-7.4" cy="-18.4" r="0.6" fill="#b0b6c4" opacity="0.55"/>
<circle cx="-7.6" cy="3.1" r="0.8" fill="#b0b6c4" opacity="0.55"/>
<circle cx="-13.8" cy="-10.0" r="0.6" fill="#a0a8b8" opacity="0.55"/>
<circle cx="-0.1" cy="17.5" r="0.8" fill="#c4c8d2" opacity="0.55"/>
<circle cx="12.6" cy="11.3" r="0.8" fill="#d0d0d8" opacity="0.55"/>
<circle cx="5.0" cy="3.7" r="0.6" fill="#b0b6c4" opacity="0.55"/>
<circle cx="0.5" cy="-15.5" r="1.0" fill="#98a0b4" opacity="0.55"/>
<circle cx="12.4" cy="6.3" r="0.6" fill="#d0d0d8" opacity="0.55"/>
<circle cx="17.7" cy="15.1" r="0.6" fill="#a0a8b8" opacity="0.55"/>
<circle cx="2.2" cy="5.3" r="0.6" fill="#98a0b4" opacity="0.55"/>
<circle cx="14.1" cy="-10.7" r="1.0" fill="#98a0b4" opacity="0.55"/>
<circle cx="10.3" cy="16.3" r="0.6" fill="#b0b6c4" opacity="0.55"/>
<circle cx="26.2" cy="11.1" r="0.6" fill="#98a0b4" opacity="0.55"/>
<circle cx="-8.4" cy="-8.9" r="0.6" fill="#c4c8d2" opacity="0.55"/>
<circle cx="-4.9" cy="-8.5" r="0.8" fill="#b0b6c4" opacity="0.55"/>
<circle cx="-1.3" cy="10.9" r="0.6" fill="#98a0b4" opacity="0.55"/>
<circle cx="2.5" cy="6.5" r="0.6" fill="#98a0b4" opacity="0.55"/>
<circle cx="3.2" cy="4.9" r="1.0" fill="#98a0b4" opacity="0.55"/>
<circle cx="-9.3" cy="-11.7" r="0.8" fill="#98a0b4" opacity="0.55"/>
<circle cx="2.9" cy="-2.4" r="0.6" fill="#b0b6c4" opacity="0.55"/>
<circle cx="-10.3" cy="-5.3" r="0.6" fill="#a0a8b8" opacity="0.55"/>
<circle cx="-10.3" cy="-34.5" r="1.0" fill="#d0d0d8" opacity="0.55"/>
<circle cx="11.0" cy="-35.1" r="0.8" fill="#d0d0d8" opacity="0.55"/>
<circle cx="2.1" cy="-0.4" r="0.6" fill="#c4c8d2" opacity="0.55"/>
<circle cx="-3.0" cy="-4.5" r="0.6" fill="#a0a8b8" opacity="0.55"/>
<circle cx="7.1" cy="8.5" r="1.0" fill="#c4c8d2" opacity="0.55"/>
<circle cx="14.0" cy="67.3" r="0.6" fill="#d0d0d8" opacity="0.55"/>
<circle cx="-5.7" cy="3.5" r="0.6" fill="#a0a8b8" opacity="0.55"/>
<circle cx="-4.8" cy="-8.3" r="0.8" fill="#b0b6c4" opacity="0.55"/>
<circle cx="-4.1" cy="-10.1" r="1.0" fill="#b0b6c4" opacity="0.55"/>
<circle cx="-4.5" cy="-6.0" r="1.0" fill="#d0d0d8" opacity="0.55"/>
<circle cx="-4.5" cy="-9.6" r="0.6" fill="#d0d0d8" opacity="0.55"/>
<circle cx="3.0" cy="5.7" r="1.0" fill="#b0b6c4" opacity="0.55"/>
<circle cx="-6.9" cy="8.3" r="0.6" fill="#98a0b4" opacity="0.55"/>
<circle cx="-4.8" cy="10.8" r="0.8" fill="#98a0b4" opacity="0.55"/>
<circle cx="-17.4" cy="-29.6" r="1.0" fill="#98a0b4" opacity="0.55"/>
<circle cx="-3.9" cy="-3.1" r="0.6" fill="#a0a8b8" opacity="0.55"/>
<circle cx="3.2" cy="5.2" r="0.8" fill="#98a0b4" opacity="0.55"/>
<circle cx="-13.7" cy="-1.1" r="0.8" fill="#b0b6c4" opacity="0.55"/>
<circle cx="-13.9" cy="-11.8" r="1.0" fill="#d0d0d8" opacity="0.55"/>
<circle cx="-25.6" cy="-25.7" r="0.6" fill="#d0d0d8" opacity="0.55"/>
<circle cx="8.3" cy="12.0" r="1.0" fill="#a0a8b8" opacity="0.55"/>
<ellipse cx="0" cy="0" rx="9" ry="13" transform="rotate(-30)" fill="#dcdad6" opacity="0.72" filter="url(#b3)"/>
<circle cx="0" cy="0" r="3.2" fill="#fffaf4" filter="url(#b1)"/>
</g>
<circle cx="45.0" cy="123.6" r="2.34" fill="#f0f0f0" opacity="0.4" filter="url(#b2)"/>
<circle cx="45.0" cy="123.6" r="1.3" fill="#f0f0f0"/>
<circle cx="138.5" cy="126.6" r="2.34" fill="#f0b060" opacity="0.4" filter="url(#b2)"/>
<circle cx="138.5" cy="126.6" r="1.3" fill="#f0b060"/>
<circle cx="169.5" cy="125.4" r="2.70" fill="#fff0b0" opacity="0.4" filter="url(#b2)"/>
<circle cx="169.5" cy="125.4" r="1.5" fill="#fff0b0"/>
<circle cx="136.4" cy="42.0" r="1.98" fill="#a8c8f0" opacity="0.4" filter="url(#b2)"/>
<circle cx="136.4" cy="42.0" r="1.1" fill="#a8c8f0"/>
<circle cx="51.7" cy="38.4" r="1.62" fill="#8a8a8a" opacity="0.4" filter="url(#b2)"/>
<circle cx="51.7" cy="38.4" r="0.9" fill="#8a8a8a"/>
<circle cx="37.0" cy="26.0" r="1.44" fill="#8a8a8a" opacity="0.4" filter="url(#b2)"/>
<circle cx="37.0" cy="26.0" r="0.8" fill="#8a8a8a"/>
<circle cx="202.5" cy="190.0" r="2.16" fill="#b0d0ff" opacity="0.4" filter="url(#b2)"/>
<circle cx="202.5" cy="190.0" r="1.2" fill="#b0d0ff"/>
<circle cx="211.4" cy="98.0" r="1.80" fill="#e0e0f0" opacity="0.4" filter="url(#b2)"/>
<circle cx="211.4" cy="98.0" r="1.0" fill="#e0e0f0"/>
<circle cx="268.0" cy="151.6" r="2.16" fill="#f0f0f0" opacity="0.4" filter="url(#b2)"/>
<circle cx="268.0" cy="151.6" r="1.2" fill="#f0f0f0"/>
<circle cx="214.0" cy="274.0" r="1.98" fill="#b0d0ff" opacity="0.4" filter="url(#b2)"/>
<circle cx="214.0" cy="274.0" r="1.1" fill="#b0d0ff"/>
<circle cx="329.0" cy="229.0" r="1.98" fill="#e0a060" opacity="0.4" filter="url(#b2)"/>
<circle cx="329.0" cy="229.0" r="1.1" fill="#e0a060"/>
<circle cx="335.0" cy="88.0" r="2.34" fill="#f0f0f0" opacity="0.4" filter="url(#b2)"/>
<circle cx="335.0" cy="88.0" r="1.3" fill="#f0f0f0"/>
<circle cx="350.0" cy="106.7" r="2.52" fill="#c8e0ff" opacity="0.4" filter="url(#b2)"/>
<circle cx="350.0" cy="106.7" r="1.4" fill="#c8e0ff"/>
<circle cx="366.7" cy="103.8" r="1.62" fill="#8a8a8a" opacity="0.4" filter="url(#b2)"/>
<circle cx="366.7" cy="103.8" r="0.9" fill="#8a8a8a"/>
<circle cx="310.7" cy="49.0" r="1.62" fill="#8a8a8a" opacity="0.4" filter="url(#b2)"/>
<circle cx="310.7" cy="49.0" r="0.9" fill="#8a8a8a"/>
<circle cx="60.0" cy="163.0" r="1.98" fill="#e0a050" opacity="0.4" filter="url(#b2)"/>
<circle cx="60.0" cy="163.0" r="1.1" fill="#e0a050"/>
<circle cx="5.5" cy="158.8" r="1.62" fill="#8a8a8a" opacity="0.4" filter="url(#b2)"/>
<circle cx="5.5" cy="158.8" r="0.9" fill="#8a8a8a"/>
<circle cx="22.0" cy="202.0" r="1.62" fill="#8a8a8a" opacity="0.4" filter="url(#b2)"/>
<circle cx="22.0" cy="202.0" r="0.9" fill="#8a8a8a"/>
<circle cx="151.6" cy="202.7" r="1.62" fill="#8a8a8a" opacity="0.4" filter="url(#b2)"/>
<circle cx="151.6" cy="202.7" r="0.9" fill="#8a8a8a"/>
<circle cx="139.0" cy="158.0" r="1.44" fill="#8a8a8a" opacity="0.4" filter="url(#b2)"/>
<circle cx="139.0" cy="158.0" r="0.8" fill="#8a8a8a"/>
<circle cx="109.5" cy="208.5" r="1.44" fill="#8a8a8a" opacity="0.4" filter="url(#b2)"/>
<circle cx="109.5" cy="208.5" r="0.8" fill="#8a8a8a"/>
<circle cx="57.0" cy="68.0" r="1.44" fill="#8a8a8a" opacity="0.4" filter="url(#b2)"/>
<circle cx="57.0" cy="68.0" r="0.8" fill="#8a8a8a"/>
<circle cx="89.0" cy="88.0" r="1.26" fill="#8a8a8a" opacity="0.4" filter="url(#b2)"/>
<circle cx="89.0" cy="88.0" r="0.7" fill="#8a8a8a"/>
<circle cx="269.0" cy="58.0" r="1.44" fill="#8a8a8a" opacity="0.4" filter="url(#b2)"/>
<circle cx="269.0" cy="58.0" r="0.8" fill="#8a8a8a"/>
<circle cx="309.0" cy="178.0" r="1.44" fill="#8a8a8a" opacity="0.4" filter="url(#b2)"/>
<circle cx="309.0" cy="178.0" r="0.8" fill="#8a8a8a"/>
<circle cx="229.0" cy="238.0" r="1.44" fill="#8a8a8a" opacity="0.4" filter="url(#b2)"/>
<circle cx="229.0" cy="238.0" r="0.8" fill="#8a8a8a"/>
<circle cx="369.0" cy="158.0" r="1.26" fill="#8a8a8a" opacity="0.4" filter="url(#b2)"/>
<circle cx="369.0" cy="158.0" r="0.7" fill="#8a8a8a"/>
<circle cx="379.0" cy="58.0" r="1.26" fill="#8a8a8a" opacity="0.4" filter="url(#b2)"/>
<circle cx="379.0" cy="58.0" r="0.7" fill="#8a8a8a"/>
<rect x="129.5" y="48.5" width="130.8" height="195.4" fill="none" stroke="#1616d0" stroke-width="1.5"/>
<path d="M129.5,53.5 L129.5,48.5 L139.5,48.5" stroke="#1616d0" stroke-width="2.6" fill="none"/>
<path d="M260.3,53.5 L260.3,48.5 L250.3,48.5" stroke="#1616d0" stroke-width="2.6" fill="none"/>
<path d="M129.5,238.9 L129.5,243.9 L139.5,243.9" stroke="#1616d0" stroke-width="2.6" fill="none"/>
<path d="M260.3,238.9 L260.3,243.9 L250.3,243.9" stroke="#1616d0" stroke-width="2.6" fill="none"/>
<g stroke="#f4c8f4" stroke-width="3.4" opacity="0.55"><line x1="188.2" y1="146.2" x2="192.1" y2="146.2"/><line x1="196.9" y1="146.2" x2="200.8" y2="146.2"/><line x1="194.5" y1="140.8" x2="194.5" y2="143.8"/><line x1="194.5" y1="148.6" x2="194.5" y2="151.6"/></g>
<g stroke="#8c2ca8" stroke-width="1.9" opacity="1"><line x1="188.2" y1="146.2" x2="192.1" y2="146.2"/><line x1="196.9" y1="146.2" x2="200.8" y2="146.2"/><line x1="194.5" y1="140.8" x2="194.5" y2="143.8"/><line x1="194.5" y1="148.6" x2="194.5" y2="151.6"/></g>
</svg><div style="position:absolute;left:1.7px;top:1.4px;width:32px;height:18px;border:1px solid #8a8a8a;border-radius:2px;background:#0a0a0a"></div>
<div style="position:absolute;left:5.5px;top:5.5px;font-family:'Liberation Mono',monospace;font-weight:bold;font-size:8.2px;line-height:1;color:#f0f0f0;letter-spacing:-0.9px">ICRS</div>
<svg style="position:absolute;left:25px;top:8px" width="6" height="4" viewBox="0 0 6 4"><path d="M0.8,0.8 L3,3 L5.2,0.8" stroke="#f0f0f0" stroke-width="1.1" fill="none"/></svg>
<div style="position:absolute;left:39.4px;top:1.4px;width:125.5px;height:18px;border:1px solid #8a8a8a;border-radius:2px;background:#0a0a0a"></div>
<div style="position:absolute;left:57.3px;top:1.4px;width:1px;height:18px;background:#8a8a8a"></div>
<svg style="position:absolute;left:42px;top:4px" width="13" height="13" viewBox="0 0 13 13"><rect x="4.6" y="0.8" width="7.4" height="7.4" rx="1.8" stroke="#f4f4f4" stroke-width="1.3" fill="none"/><rect x="0.8" y="4.6" width="7.4" height="7.4" rx="1.8" stroke="#f4f4f4" stroke-width="1.3" fill="#0c0b0b"/></svg>
<div style="position:absolute;left:59px;top:6px;font-family:'Liberation Mono',monospace;font-size:8px;line-height:1;color:#b42ec8;letter-spacing:-0.7px;white-space:nowrap">01 33 50.90 +30 39 36.6</div>
<div style="position:absolute;left:2px;top:276px;width:28px;height:14.6px;border:1px solid #9a9a9a;border-radius:3px"></div>
<div style="position:absolute;left:16.4px;top:276px;width:1px;height:14.6px;background:#9a9a9a"></div>
<div style="position:absolute;left:5.5px;top:283px;width:7px;height:1.3px;background:#f0f0f0"></div>
<div style="position:absolute;left:20px;top:283px;width:7px;height:1.3px;background:#f0f0f0"></div>
<div style="position:absolute;left:22.85px;top:280.15px;width:1.3px;height:7px;background:#f0f0f0"></div>
<div style="position:absolute;left:31.5px;top:280.5px;font-family:'Liberation Mono',monospace;font-weight:bold;font-size:7px;line-height:1;color:#e8e8e8;letter-spacing:-0.45px;white-space:nowrap">2.360° × 1.770°</div>
<svg style="position:absolute;left:369px;top:276.5px" width="20" height="12" viewBox="0 0 20 12"><ellipse cx="10.5" cy="6.5" rx="8.6" ry="3.8" transform="rotate(-20 10.5 6.5)" fill="#1c2470" opacity="0.9"/><ellipse cx="10.5" cy="6.5" rx="6.6" ry="2.8" transform="rotate(-20 10.5 6.5)" fill="none" stroke="#d42a24" stroke-width="2"/><circle cx="12" cy="5.8" r="1.3" fill="#e84030"/><circle cx="8" cy="7" r="0.9" fill="#30a040"/></svg></div>

<div class="a" style="left:430px;top:543px;width:391px;height:36.5px;background:#f0f0f1;border-radius:4px"></div>
<div class="t" style="left:440.6px;top:549.5px;font-size:8.5px;color:#8a8a8c;line-height:11.9px">Move the map or search for an object, then press "Use current position" to populate the<br>coordinates.</div>

<div class="a" style="left:431px;top:592px;width:45.5px;height:19.5px;background:#e9eaed;border-radius:3px"></div>
<div class="t" style="left:442px;top:598px;font-size:8.5px;color:#a5a5a8">BACK</div>

<div class="a" style="left:965px;top:592px;width:144px;height:19.5px;background:#0b64d0;border-radius:3px"></div>
<div class="t" style="left:977px;top:598.5px;font-size:8px;font-weight:bold;color:#fff">SAVE TARGET AND CONTINUE</div>

<!-- RIGHT COLUMN -->
<div class="lbl" style="left:834px;top:187.5px">Target name</div>
<div class="inp" style="left:834px;top:200px;width:275px;height:19.5px"></div>
<div class="t" style="left:841px;top:206.8px;font-size:8px;color:#c0c0c2">e.g. IC 5070 - Pelican Nebula</div>

<div class="lbl" style="left:834px;top:231px;font-size:7.55px">Right Ascension (degrees)</div>
<div class="inp" style="left:834px;top:244.5px;width:133px;height:19.5px"></div>
<div class="t" style="left:841px;top:250px;font-size:8.5px;color:#505052">23,4621</div>
<div class="lbl" style="left:975px;top:231px;font-size:7.6px">Declination (degrees)</div>
<div class="inp" style="left:975px;top:244.5px;width:134px;height:19.5px"></div>
<div class="t" style="left:982.5px;top:250px;font-size:8.5px;color:#505052">30,6602</div>
<div class="t" style="left:834px;top:265px;font-size:6.65px;color:#a0a0a2">R.A.:1h 33m 51s</div>
<div class="t" style="left:975px;top:265px;font-size:7px;color:#a0a0a2">DEC.:30° 39' 37"</div>
<div class="lbl" style="left:834px;top:276px">Rotation (degrees)</div>
<div class="inp" style="left:834px;top:289px;width:133px;height:19.5px;border:1.5px solid #3b7fd6"></div>
<svg class="a" style="left:952px;top:292.5px" width="8" height="12" viewBox="0 0 8 12"><path d="M1.5,4.6 L4,1.6 L6.5,4.6 Z M1.5,7.4 L4,10.4 L6.5,7.4 Z" fill="#6a6a6c"/></svg>
<div class="t" style="left:841px;top:294.6px;font-size:8.6px;color:#505052">90</div>

<div class="a" style="left:834px;top:321px;width:275px;height:76px;background:#fff;border-radius:3px;box-shadow:0 1px 5px rgba(0,0,0,.11)"></div>
<div class="t" style="left:844px;top:332.5px;font-size:8.5px;color:#c6c6c8">Selected telescope</div>
<div class="t" style="left:844px;top:347.5px;font-size:8px;color:#505052;-webkit-text-stroke:0.25px #505052">USA1</div>
<div class="t" style="left:844px;top:359.3px;font-size:7.1px;color:#c0c0c2">Pie Town, New Mexico, Usa</div>
<div class="t" style="left:844px;top:369.8px;font-size:6.8px;color:#c0c0c2">FOV: 1.18° x 0.79°</div>

</body></html>
